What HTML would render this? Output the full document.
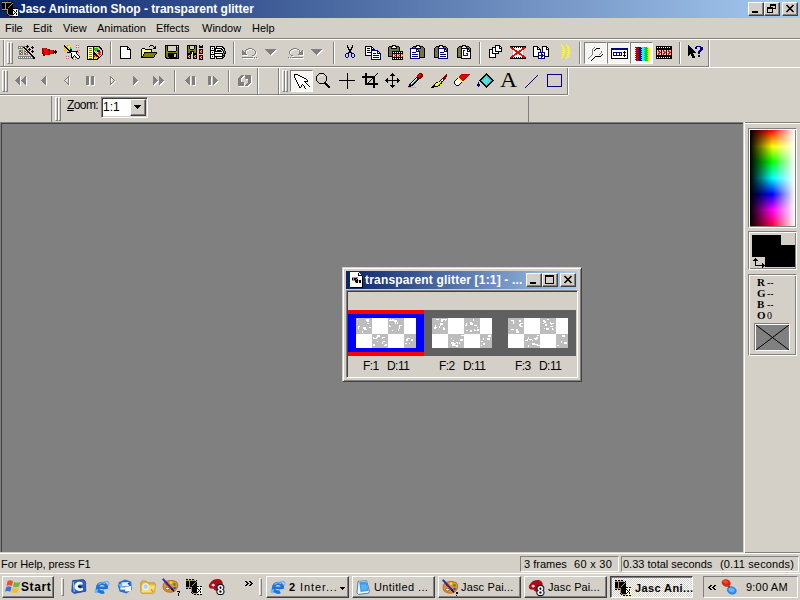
<!DOCTYPE html>
<html>
<head>
<meta charset="utf-8">
<title>Jasc Animation Shop - transparent glitter</title>
<style>
html,body{margin:0;padding:0;}
body{width:800px;height:600px;overflow:hidden;background:#d4d0c8;font-family:"Liberation Sans",sans-serif;font-size:11px;color:#000;position:relative;}
div,svg{position:absolute;}
svg{overflow:visible;}
.t{white-space:nowrap;line-height:13px;}
.b{font-weight:bold;}
#title{left:0;top:0;width:800px;height:18px;background:linear-gradient(to right,#0a246a,#a6caf0);}
.wbtn{background:#d4d0c8;box-sizing:border-box;border:1px solid;border-color:#fff #404040 #404040 #fff;box-shadow:inset -1px -1px 0 #808080;}
.raised{background:#d4d0c8;box-sizing:border-box;border:1px solid;border-color:#fff #404040 #404040 #fff;box-shadow:inset -1px -1px 0 #808080,inset 1px 1px 0 #d4d0c8;}
.sunk1{box-sizing:border-box;border:1px solid;border-color:#808080 #fff #fff #808080;}
.sunk2{box-sizing:border-box;border:1px solid;border-color:#808080 #fff #fff #808080;box-shadow:inset 1px 1px 0 #404040,inset -1px -1px 0 #d4d0c8;}
.etch{box-sizing:border-box;border:1px solid;border-color:#808080 #fff #fff #808080;box-shadow:inset 1px 1px 0 #fff,inset -1px -1px 0 #808080;}
.hl{height:1px;}
.vl{width:1px;}
.dk{background:#808080;}
.wh{background:#fff;}
.sep{width:2px;height:22px;box-sizing:border-box;border-left:1px solid #808080;border-right:1px solid #fff;}
.grip{width:3px;box-sizing:border-box;border:1px solid;border-color:#fff #808080 #808080 #fff;}
.pressed{width:23px;height:22px;box-sizing:border-box;border:1px solid;border-color:#808080 #fff #fff #808080;background:#f6f5f2;}
</style>
</head>
<body>
<!-- ===== TITLE BAR ===== -->
<div id="title">
  <svg style="left:2px;top:1px" width="16" height="16" viewBox="0 0 16 16" shape-rendering="crispEdges"><path d="M0 0h2v1h-2zM3 0h2v1h-2zM6 0h2v1h-2zM10 1h1v1h-1zM0 2h3v1h-3zM4 2h6v1h-6zM0 3h3v1h-3zM4 3h5v1h-5zM10 3h1v1h-1zM0 4h3v1h-3zM4 4h4v1h-4zM9 4h2v1h-2zM0 5h3v1h-3zM4 5h3v1h-3zM8 5h3v1h-3zM0 6h3v1h-3zM4 6h2v1h-2zM7 6h4v1h-4zM0 7h3v1h-3zM4 7h9v1h-9zM14 7h2v1h-2zM6 8h5v1h-5zM0 9h2v1h-2zM3 9h2v1h-2zM6 9h6v1h-6zM14 9h1v1h-1zM6 10h5v1h-5zM12 10h1v1h-1zM14 10h1v1h-1zM6 11h5v1h-5zM13 11h1v1h-1zM6 12h5v1h-5zM12 12h1v1h-1zM14 12h1v1h-1zM5 13h1v1h-1zM7 13h5v1h-5zM14 13h1v1h-1zM6 14h1v1h-1zM8 15h2v1h-2zM11 15h2v1h-2zM14 15h2v1h-2z" fill="#000"/><path d="M0 1h9v1h-9zM3 2h1v1h-1zM10 2h1v1h-1zM3 3h1v1h-1zM9 3h1v1h-1zM3 4h1v1h-1zM8 4h1v1h-1zM3 5h1v1h-1zM7 5h1v1h-1zM3 6h1v1h-1zM6 6h1v1h-1zM3 7h1v1h-1zM0 8h6v1h-6zM5 9h1v1h-1zM5 10h1v1h-1zM5 11h1v1h-1zM5 12h1v1h-1zM6 13h1v1h-1zM7 14h4v1h-4z" fill="#b09458"/><path d="M11 8h5v1h-5zM12 9h2v1h-2zM15 9h1v1h-1zM11 10h1v1h-1zM13 10h1v1h-1zM15 10h1v1h-1zM11 11h2v1h-2zM14 11h2v1h-2zM11 12h1v1h-1zM13 12h1v1h-1zM15 12h1v1h-1zM12 13h2v1h-2zM15 13h1v1h-1zM11 14h5v1h-5z" fill="#ffffd8"/></svg>
  <div class="t b" id="cap" style="left:19px;top:3px;color:#fff;font-size:12px;">Jasc Animation Shop - transparent glitter</div>
  <div class="wbtn" style="left:748px;top:2px;width:16px;height:14px;"><div style="left:3px;top:8px;width:6px;height:2px;background:#000"></div></div>
  <div class="wbtn" style="left:764px;top:2px;width:16px;height:14px;">
    <div style="left:5px;top:1px;width:6px;height:5px;box-sizing:border-box;border:1px solid #000;border-top-width:2px;"></div>
    <div style="left:2px;top:4px;width:6px;height:6px;box-sizing:border-box;border:1px solid #000;border-top-width:2px;background:#d4d0c8;"></div>
  </div>
  <div class="wbtn" style="left:782px;top:2px;width:16px;height:14px;">
    <svg style="left:3px;top:2px" width="8" height="7" viewBox="0 0 8 7"><path d="M0.5 0L7.5 7M7.5 0L0.5 7" stroke="#000" stroke-width="1.6" fill="none"/></svg>
  </div>
</div>
<!-- ===== MENU ===== -->
<div id="menu" style="left:0;top:18px;width:800px;height:20px;">
  <div class="t" style="left:5px;top:4px">File</div>
  <div class="t" style="left:33px;top:4px">Edit</div>
  <div class="t" style="left:63px;top:4px">View</div>
  <div class="t" style="left:97px;top:4px">Animation</div>
  <div class="t" style="left:156px;top:4px">Effects</div>
  <div class="t" style="left:202px;top:4px">Window</div>
  <div class="t" style="left:252px;top:4px">Help</div>
</div>
<div class="hl dk" style="left:0;top:38px;width:800px"></div>
<div class="hl wh" style="left:0;top:39px;width:800px"></div>
<!-- ===== TOOLBAR ROW 1 ===== -->
<div id="tb1" style="left:0;top:40px;width:800px;height:26px;">
  <div class="vl dk" style="left:3px;top:0;height:26px"></div>
  <div class="vl wh" style="left:4px;top:0;height:26px"></div>
  <div class="grip" style="left:7px;top:2px;height:22px"></div>
  <div class="grip" style="left:10px;top:2px;height:22px"></div>
  <div class="sep" style="left:110px;top:2px"></div>
  <div class="sep" style="left:233px;top:2px"></div>
  <div class="sep" style="left:333px;top:2px"></div>
  <div class="sep" style="left:479px;top:2px"></div>
  <div class="sep" style="left:579px;top:2px"></div>
  <div class="sep" style="left:679px;top:2px"></div>
  <div class="pressed" style="left:584px;top:2px"></div>
  <div class="pressed" style="left:607px;top:2px"></div>
  <div class="pressed" style="left:630px;top:2px"></div>
  <div class="vl dk" style="left:708px;top:0;height:27px"></div>
  <div class="vl wh" style="left:709px;top:0;height:27px"></div>
  <svg style="left:18px;top:5px" width="17" height="14" viewBox="0 0 17 14" shape-rendering="crispEdges"><path d="M9 0h1v1h-1zM8 1h3v1h-3zM14 1h1v1h-1zM5 2h2v1h-2zM9 2h1v1h-1zM13 2h3v1h-3zM6 3h2v1h-2zM11 3h1v1h-1zM14 3h1v1h-1zM7 4h2v1h-2zM10 4h3v1h-3zM8 5h2v1h-2zM11 5h1v1h-1zM14 5h1v1h-1zM9 6h2v1h-2zM13 6h3v1h-3zM10 7h2v1h-2zM14 7h1v1h-1zM11 8h2v1h-2zM12 9h2v1h-2zM13 10h2v1h-2zM14 11h2v1h-2zM15 12h2v1h-2zM15 13h2v1h-2z" fill="#000"/><path d="M0 1h8v1h-8zM0 2h1v1h-1zM2 2h1v1h-1zM4 2h1v1h-1zM8 2h1v1h-1zM0 3h5v1h-5zM8 3h1v1h-1zM1 5h4v1h-4zM6 5h1v1h-1zM1 6h1v1h-1zM4 6h1v1h-1zM6 6h1v1h-1zM1 7h1v1h-1zM4 7h1v1h-1zM6 7h1v1h-1zM9 7h1v1h-1zM1 8h1v1h-1zM4 8h1v1h-1zM6 8h1v1h-1zM9 8h1v1h-1zM1 9h4v1h-4zM6 9h4v1h-4zM0 11h14v1h-14zM0 12h1v1h-1zM2 12h1v1h-1zM4 12h1v1h-1zM6 12h1v1h-1zM8 12h1v1h-1zM10 12h1v1h-1zM12 12h1v1h-1zM14 12h1v1h-1zM0 13h15v1h-15z" fill="#808080"/><path d="M1 2h1v1h-1zM3 2h1v1h-1zM7 2h1v1h-1zM3 6h1v1h-1zM8 6h1v1h-1zM2 7h1v1h-1zM7 7h1v1h-1zM3 8h1v1h-1zM8 8h1v1h-1zM1 12h1v1h-1zM3 12h1v1h-1zM5 12h1v1h-1zM7 12h1v1h-1zM9 12h1v1h-1zM11 12h1v1h-1zM13 12h1v1h-1z" fill="#fff"/><path d="M5 3h1v1h-1zM6 4h1v1h-1zM7 5h1v1h-1z" fill="#ff0"/><path d="M2 6h1v1h-1zM7 6h1v1h-1zM3 7h1v1h-1zM8 7h1v1h-1zM2 8h1v1h-1zM7 8h1v1h-1z" fill="#f00"/></svg>
  <svg style="left:42px;top:8px" width="15" height="8" viewBox="0 0 15 8" shape-rendering="crispEdges"><path d="M0 0h1v1h-1zM4 0h1v1h-1zM0 1h1v1h-1zM6 1h2v1h-2zM0 2h2v1h-2zM6 2h2v1h-2zM1 3h1v1h-1zM7 3h1v1h-1zM11 3h1v1h-1zM13 3h1v1h-1zM0 4h2v1h-2zM7 4h1v1h-1zM11 4h1v1h-1zM14 4h1v1h-1zM0 5h2v1h-2zM6 5h2v1h-2zM1 6h2v1h-2zM6 6h2v1h-2zM1 7h2v1h-2z" fill="#800000"/><path d="M1 0h3v1h-3zM1 1h5v1h-5zM2 2h4v1h-4zM8 2h3v1h-3zM2 3h5v1h-5zM8 3h3v1h-3zM2 4h5v1h-5zM8 4h3v1h-3zM2 5h4v1h-4zM8 5h3v1h-3zM3 6h3v1h-3z" fill="#f00"/><path d="M11 2h1v1h-1zM13 2h1v1h-1zM12 3h1v1h-1zM14 3h1v1h-1zM12 4h2v1h-2zM11 5h1v1h-1zM13 5h1v1h-1z" fill="#000"/><path d="M0 3h1v1h-1z" fill="#c00000"/></svg>
  <svg style="left:64px;top:5px" width="16" height="15" viewBox="0 0 16 15" shape-rendering="crispEdges"><path d="M0 0h1v1h-1zM0 1h2v1h-2zM1 2h2v1h-2zM2 3h2v1h-2zM3 4h2v1h-2zM4 5h2v1h-2zM5 6h9v1h-9zM3 7h4v1h-4zM12 7h1v1h-1zM7 8h1v1h-1zM12 8h1v1h-1zM7 9h1v1h-1zM13 9h1v1h-1zM7 10h1v1h-1zM10 10h1v1h-1zM14 10h1v1h-1zM7 11h1v1h-1zM9 11h1v1h-1zM11 11h1v1h-1zM15 11h1v1h-1zM7 12h2v1h-2zM12 12h1v1h-1zM15 12h1v1h-1zM8 13h1v1h-1zM13 13h2v1h-2z" fill="#000"/><path d="M3 0h2v1h-2zM3 1h1v1h-1zM0 3h1v1h-1zM1 4h1v1h-1zM0 5h1v1h-1zM2 5h1v1h-1zM1 6h1v1h-1zM3 6h1v1h-1z" fill="#ffa000"/><path d="M12 0h1v1h-1zM14 0h1v1h-1zM12 2h1v1h-1zM14 2h1v1h-1zM13 5h1v1h-1zM15 5h1v1h-1zM14 7h1v1h-1zM2 11h1v1h-1zM4 11h1v1h-1zM9 12h1v1h-1zM11 12h1v1h-1zM2 13h1v1h-1zM4 13h1v1h-1zM9 14h1v1h-1zM11 14h1v1h-1z" fill="#c06090"/><path d="M13 0h1v1h-1zM12 1h1v1h-1zM14 1h1v1h-1zM13 2h1v1h-1zM14 5h1v1h-1zM14 6h1v1h-1zM15 7h1v1h-1zM3 11h1v1h-1zM2 12h1v1h-1zM4 12h1v1h-1zM10 12h1v1h-1zM3 13h1v1h-1zM9 13h1v1h-1zM11 13h1v1h-1zM10 14h1v1h-1z" fill="#ffc0c0"/><path d="M4 1h2v1h-2zM4 2h2v1h-2zM1 3h1v1h-1zM5 3h1v1h-1zM0 4h1v1h-1zM2 4h1v1h-1zM1 5h1v1h-1zM3 5h1v1h-1zM2 6h1v1h-1zM4 6h1v1h-1z" fill="#ff0"/><path d="M13 1h1v1h-1zM15 6h1v1h-1zM7 7h5v1h-5zM8 8h4v1h-4zM8 9h5v1h-5zM8 10h2v1h-2zM11 10h3v1h-3zM8 11h1v1h-1zM12 11h3v1h-3zM3 12h1v1h-1zM13 12h2v1h-2zM10 13h1v1h-1z" fill="#fff"/><path d="M6 2h1v1h-1zM6 3h1v1h-1z" fill="#0c0"/><path d="M7 3h1v1h-1z" fill="#0ff"/><path d="M6 4h2v1h-2zM6 5h2v1h-2z" fill="#000080"/></svg>
  <svg style="left:87px;top:6px" width="16" height="14" viewBox="0 0 16 14" shape-rendering="crispEdges"><path d="M0 0h13v1h-13zM0 1h1v1h-1zM6 1h1v1h-1zM12 1h2v1h-2zM0 2h1v1h-1zM6 2h1v1h-1zM13 2h2v1h-2zM0 3h1v1h-1zM6 3h1v1h-1zM14 3h1v1h-1zM0 4h1v1h-1zM6 4h1v1h-1zM15 4h1v1h-1zM0 5h1v1h-1zM6 5h1v1h-1zM15 5h1v1h-1zM0 6h1v1h-1zM6 6h2v1h-2zM15 6h1v1h-1zM0 7h1v1h-1zM6 7h1v1h-1zM8 7h1v1h-1zM15 7h1v1h-1zM0 8h1v1h-1zM6 8h1v1h-1zM9 8h1v1h-1zM15 8h1v1h-1zM0 9h1v1h-1zM6 9h1v1h-1zM9 9h2v1h-2zM14 9h1v1h-1zM0 10h1v1h-1zM6 10h1v1h-1zM10 10h2v1h-2zM13 10h1v1h-1zM0 11h1v1h-1zM6 11h1v1h-1zM11 11h2v1h-2zM0 12h1v1h-1zM6 12h1v1h-1zM10 12h2v1h-2zM0 13h11v1h-11z" fill="#000"/><path d="M1 1h5v1h-5zM1 2h1v1h-1zM5 2h1v1h-1zM1 3h5v1h-5zM1 4h1v1h-1zM5 4h1v1h-1zM1 5h5v1h-5zM1 6h1v1h-1zM5 6h1v1h-1zM1 7h5v1h-5zM1 8h1v1h-1zM5 8h1v1h-1zM1 9h5v1h-5zM1 10h1v1h-1zM5 10h1v1h-1zM1 11h5v1h-5zM1 12h1v1h-1zM5 12h1v1h-1z" fill="#ffffd0"/><path d="M7 1h1v1h-1zM9 1h1v1h-1zM11 1h1v1h-1zM12 2h1v1h-1zM11 3h1v1h-1zM13 3h1v1h-1zM7 4h1v1h-1zM14 4h1v1h-1zM8 5h1v1h-1zM13 5h1v1h-1zM9 6h1v1h-1zM10 7h1v1h-1zM13 7h1v1h-1zM11 8h1v1h-1zM12 9h1v1h-1zM8 10h1v1h-1zM7 11h1v1h-1zM9 11h1v1h-1zM8 12h1v1h-1z" fill="#ffa000"/><path d="M8 1h1v1h-1zM10 1h1v1h-1zM11 2h1v1h-1zM12 3h1v1h-1zM13 4h1v1h-1zM7 5h1v1h-1zM9 5h1v1h-1zM14 5h1v1h-1zM8 6h1v1h-1zM14 6h1v1h-1zM9 7h1v1h-1zM14 7h1v1h-1zM10 8h1v1h-1zM14 8h1v1h-1zM11 9h1v1h-1zM13 9h1v1h-1zM12 10h1v1h-1zM8 11h1v1h-1zM10 11h1v1h-1zM7 12h1v1h-1zM9 12h1v1h-1z" fill="#ff0"/><path d="M2 2h3v1h-3zM2 4h3v1h-3zM2 6h3v1h-3zM2 8h3v1h-3zM2 10h3v1h-3zM2 12h3v1h-3z" fill="#808000"/><path d="M7 2h4v1h-4zM7 3h4v1h-4zM8 4h2v1h-2z" fill="#0c0"/><path d="M10 4h3v1h-3zM10 5h3v1h-3z" fill="#00f"/><path d="M10 6h1v1h-1z" fill="#fff"/><path d="M11 6h1v1h-1zM7 9h1v1h-1z" fill="#c06090"/><path d="M12 6h2v1h-2zM11 7h2v1h-2zM12 8h2v1h-2zM8 9h1v1h-1zM7 10h1v1h-1zM9 10h1v1h-1z" fill="#f00"/><path d="M7 7h1v1h-1zM7 8h2v1h-2z" fill="#000080"/></svg>
  <svg style="left:120px;top:6px" width="11" height="13" viewBox="0 0 11 13" shape-rendering="crispEdges"><path d="M0 0h8v1h-8zM0 1h1v1h-1zM7 1h2v1h-2zM0 2h1v1h-1zM7 2h1v1h-1zM9 2h1v1h-1zM0 3h1v1h-1zM7 3h4v1h-4zM0 4h1v1h-1zM10 4h1v1h-1zM0 5h1v1h-1zM10 5h1v1h-1zM0 6h1v1h-1zM10 6h1v1h-1zM0 7h1v1h-1zM10 7h1v1h-1zM0 8h1v1h-1zM10 8h1v1h-1zM0 9h1v1h-1zM10 9h1v1h-1zM0 10h1v1h-1zM10 10h1v1h-1zM0 11h1v1h-1zM10 11h1v1h-1zM0 12h11v1h-11z" fill="#000"/><path d="M1 1h6v1h-6zM1 2h6v1h-6zM8 2h1v1h-1zM1 3h6v1h-6zM1 4h9v1h-9zM1 5h9v1h-9zM1 6h9v1h-9zM1 7h9v1h-9zM1 8h9v1h-9zM1 9h9v1h-9zM1 10h9v1h-9zM1 11h9v1h-9z" fill="#fff"/></svg>
  <svg style="left:141px;top:5px" width="16" height="13" viewBox="0 0 16 13" shape-rendering="crispEdges"><path d="M9 0h3v1h-3zM8 1h1v1h-1zM12 1h1v1h-1zM14 1h1v1h-1zM13 2h2v1h-2zM1 3h3v1h-3zM12 3h3v1h-3zM0 4h1v1h-1zM4 4h7v1h-7zM0 5h1v1h-1zM10 5h1v1h-1zM0 6h1v1h-1zM10 6h1v1h-1zM0 7h1v1h-1zM3 7h13v1h-13zM0 8h1v1h-1zM3 8h1v1h-1zM15 8h1v1h-1zM0 9h1v1h-1zM2 9h1v1h-1zM14 9h1v1h-1zM0 10h1v1h-1zM2 10h1v1h-1zM13 10h1v1h-1zM0 11h2v1h-2zM13 11h1v1h-1zM0 12h13v1h-13z" fill="#000"/><path d="M1 4h3v1h-3zM1 5h9v1h-9zM1 6h9v1h-9zM1 7h2v1h-2zM1 8h2v1h-2zM1 9h1v1h-1zM1 10h1v1h-1z" fill="#ffff80"/><path d="M4 8h11v1h-11zM3 9h11v1h-11zM3 10h10v1h-10zM2 11h11v1h-11z" fill="#808000"/></svg>
  <svg style="left:165px;top:5px" width="14" height="14" viewBox="0 0 14 14" shape-rendering="crispEdges"><path d="M0 0h14v1h-14zM0 1h1v1h-1zM2 1h1v1h-1zM11 1h1v1h-1zM13 1h1v1h-1zM0 2h1v1h-1zM2 2h1v1h-1zM11 2h1v1h-1zM13 2h1v1h-1zM0 3h1v1h-1zM2 3h1v1h-1zM11 3h1v1h-1zM13 3h1v1h-1zM0 4h1v1h-1zM2 4h1v1h-1zM11 4h1v1h-1zM13 4h1v1h-1zM0 5h1v1h-1zM2 5h1v1h-1zM11 5h1v1h-1zM13 5h1v1h-1zM0 6h1v1h-1zM3 6h8v1h-8zM13 6h1v1h-1zM0 7h1v1h-1zM13 7h1v1h-1zM0 8h1v1h-1zM3 8h9v1h-9zM13 8h1v1h-1zM0 9h1v1h-1zM3 9h6v1h-6zM11 9h1v1h-1zM13 9h1v1h-1zM0 10h1v1h-1zM3 10h6v1h-6zM11 10h1v1h-1zM13 10h1v1h-1zM0 11h1v1h-1zM3 11h6v1h-6zM11 11h1v1h-1zM13 11h1v1h-1zM0 12h2v1h-2zM4 12h8v1h-8zM13 12h1v1h-1zM1 13h13v1h-13z" fill="#000"/><path d="M1 1h1v1h-1zM1 2h1v1h-1zM12 2h1v1h-1zM1 3h1v1h-1zM12 3h1v1h-1zM1 4h1v1h-1zM12 4h1v1h-1zM1 5h1v1h-1zM12 5h1v1h-1zM1 6h2v1h-2zM11 6h2v1h-2zM1 7h12v1h-12zM1 8h2v1h-2zM12 8h1v1h-1zM1 9h2v1h-2zM12 9h1v1h-1zM1 10h2v1h-2zM12 10h1v1h-1zM1 11h2v1h-2zM12 11h1v1h-1zM2 12h2v1h-2zM12 12h1v1h-1z" fill="#808000"/><path d="M3 1h8v1h-8zM3 2h8v1h-8zM3 3h8v1h-8zM3 4h8v1h-8zM3 5h8v1h-8z" fill="#d4d0c8"/><path d="M12 1h1v1h-1z" fill="#fff"/><path d="M9 9h2v1h-2zM9 10h2v1h-2zM9 11h2v1h-2z" fill="#c0c0c0"/></svg>
  <svg style="left:187px;top:5px" width="16" height="15" viewBox="0 0 16 15" shape-rendering="crispEdges"><path d="M0 0h10v1h-10zM12 0h1v1h-1zM15 0h1v1h-1zM0 1h1v1h-1zM2 1h1v1h-1zM7 1h1v1h-1zM9 1h1v1h-1zM12 1h4v1h-4zM0 2h1v1h-1zM2 2h1v1h-1zM7 2h1v1h-1zM9 2h1v1h-1zM12 2h4v1h-4zM0 3h1v1h-1zM2 3h1v1h-1zM7 3h1v1h-1zM9 3h1v1h-1zM0 4h1v1h-1zM3 4h4v1h-4zM9 4h1v1h-1zM12 4h4v1h-4zM0 5h1v1h-1zM9 5h1v1h-1zM12 5h1v1h-1zM15 5h1v1h-1zM0 6h1v1h-1zM3 6h4v1h-4zM9 6h1v1h-1zM12 6h1v1h-1zM15 6h1v1h-1zM0 7h1v1h-1zM3 7h2v1h-2zM6 7h1v1h-1zM9 7h1v1h-1zM12 7h1v1h-1zM15 7h1v1h-1zM0 8h5v1h-5zM6 8h4v1h-4zM12 8h4v1h-4zM0 9h4v1h-4zM6 9h4v1h-4zM0 10h1v1h-1zM3 10h1v1h-1zM6 10h1v1h-1zM9 10h1v1h-1zM12 10h4v1h-4zM0 11h1v1h-1zM3 11h1v1h-1zM6 11h1v1h-1zM9 11h1v1h-1zM12 11h1v1h-1zM15 11h1v1h-1zM0 12h1v1h-1zM3 12h1v1h-1zM6 12h1v1h-1zM9 12h1v1h-1zM12 12h1v1h-1zM15 12h1v1h-1zM0 13h4v1h-4zM6 13h4v1h-4zM12 13h1v1h-1zM15 13h1v1h-1zM12 14h4v1h-4z" fill="#000"/><path d="M1 1h1v1h-1zM8 1h1v1h-1zM1 2h1v1h-1zM8 2h1v1h-1zM1 3h1v1h-1zM8 3h1v1h-1zM1 4h2v1h-2zM7 4h2v1h-2zM1 5h8v1h-8zM1 6h2v1h-2zM7 6h2v1h-2zM1 7h2v1h-2zM7 7h2v1h-2z" fill="#808000"/><path d="M3 1h4v1h-4zM3 2h4v1h-4zM3 3h4v1h-4z" fill="#d4d0c8"/><path d="M13 5h1v1h-1zM14 6h1v1h-1zM13 7h1v1h-1zM1 10h1v1h-1zM7 10h1v1h-1zM2 11h1v1h-1zM8 11h1v1h-1zM13 11h1v1h-1zM1 12h1v1h-1zM7 12h1v1h-1zM14 12h1v1h-1zM13 13h1v1h-1z" fill="#f00"/><path d="M14 5h1v1h-1zM13 6h1v1h-1zM14 7h1v1h-1zM2 10h1v1h-1zM8 10h1v1h-1zM1 11h1v1h-1zM7 11h1v1h-1zM14 11h1v1h-1zM2 12h1v1h-1zM8 12h1v1h-1zM13 12h1v1h-1zM14 13h1v1h-1z" fill="#ffc0c0"/><path d="M5 7h1v1h-1zM5 8h1v1h-1z" fill="#fff"/></svg>
  <svg style="left:210px;top:6px" width="16" height="13" viewBox="0 0 16 13" shape-rendering="crispEdges"><path d="M0 0h5v1h-5zM6 0h7v1h-7zM0 1h1v1h-1zM4 1h1v1h-1zM6 1h1v1h-1zM12 1h2v1h-2zM0 2h1v1h-1zM2 2h1v1h-1zM4 2h8v1h-8zM13 2h2v1h-2zM0 3h1v1h-1zM4 3h2v1h-2zM11 3h2v1h-2zM14 3h1v1h-1zM0 4h6v1h-6zM7 4h4v1h-4zM12 4h1v1h-1zM14 4h1v1h-1zM0 5h1v1h-1zM4 5h8v1h-8zM13 5h1v1h-1zM15 5h1v1h-1zM0 6h1v1h-1zM2 6h1v1h-1zM4 6h1v1h-1zM13 6h1v1h-1zM15 6h1v1h-1zM0 7h1v1h-1zM4 7h9v1h-9zM14 7h2v1h-2zM0 8h5v1h-5zM12 8h1v1h-1zM14 8h1v1h-1zM0 9h1v1h-1zM4 9h1v1h-1zM12 9h3v1h-3zM0 10h1v1h-1zM2 10h1v1h-1zM4 10h9v1h-9zM14 10h1v1h-1zM0 11h1v1h-1zM4 11h1v1h-1zM6 11h1v1h-1zM12 11h2v1h-2zM0 12h5v1h-5zM6 12h7v1h-7z" fill="#000"/><path d="M1 1h3v1h-3zM7 1h5v1h-5zM1 2h1v1h-1zM3 2h1v1h-1zM12 2h1v1h-1zM1 3h3v1h-3zM6 3h5v1h-5zM13 3h1v1h-1zM6 4h1v1h-1zM11 4h1v1h-1zM1 5h3v1h-3zM12 5h1v1h-1zM1 6h1v1h-1zM3 6h1v1h-1zM5 6h8v1h-8zM1 7h3v1h-3zM5 8h7v1h-7zM1 9h3v1h-3zM1 10h1v1h-1zM3 10h1v1h-1zM1 11h3v1h-3zM7 11h5v1h-5z" fill="#fff"/><path d="M13 4h1v1h-1zM14 5h1v1h-1zM14 6h1v1h-1zM13 7h1v1h-1zM13 8h1v1h-1zM13 10h1v1h-1z" fill="#808080"/><path d="M5 9h7v1h-7z" fill="#ffff80"/></svg>
  <svg style="left:242px;top:8px" width="16" height="11" viewBox="0 0 16 11" shape-rendering="crispEdges"><path d="M6 0h4v1h-4zM4 1h2v1h-2zM10 1h2v1h-2zM0 2h1v1h-1zM3 2h1v1h-1zM12 2h1v1h-1zM0 3h2v1h-2zM3 3h1v1h-1zM13 3h1v1h-1zM0 4h4v1h-4zM13 4h1v1h-1zM0 5h4v1h-4zM13 5h1v1h-1zM0 6h5v1h-5zM12 6h1v1h-1zM10 7h2v1h-2zM0 9h11v1h-11zM12 9h1v1h-1zM14 9h1v1h-1z" fill="#808080"/><path d="M7 1h3v1h-3zM5 2h2v1h-2zM11 2h1v1h-1zM4 3h1v1h-1zM4 4h1v1h-1zM14 4h1v1h-1zM4 5h1v1h-1zM14 5h1v1h-1zM14 6h1v1h-1zM1 7h5v1h-5zM13 7h1v1h-1zM11 8h2v1h-2zM1 10h11v1h-11zM13 10h1v1h-1zM15 10h1v1h-1z" fill="#fff"/></svg>
  <svg style="left:265px;top:9px" width="12" height="7" viewBox="0 0 12 7" shape-rendering="crispEdges"><path d="M0 0h11v1h-11zM1 1h9v1h-9zM2 2h7v1h-7zM3 3h5v1h-5zM4 4h3v1h-3zM5 5h1v1h-1z" fill="#808080"/><path d="M10 1h2v1h-2zM9 2h2v1h-2zM8 3h2v1h-2zM7 4h2v1h-2zM6 5h2v1h-2zM6 6h1v1h-1z" fill="#fff"/></svg>
  <svg style="left:288px;top:8px" width="16" height="11" viewBox="0 0 16 11" shape-rendering="crispEdges"><path d="M5 0h4v1h-4zM3 1h2v1h-2zM9 1h2v1h-2zM2 2h1v1h-1zM11 2h1v1h-1zM14 2h1v1h-1zM1 3h1v1h-1zM11 3h1v1h-1zM13 3h2v1h-2zM1 4h1v1h-1zM11 4h4v1h-4zM1 5h1v1h-1zM11 5h4v1h-4zM2 6h1v1h-1zM10 6h5v1h-5zM3 7h2v1h-2zM0 9h1v1h-1zM2 9h1v1h-1zM4 9h11v1h-11z" fill="#808080"/><path d="M6 1h3v1h-3zM4 2h2v1h-2zM10 2h1v1h-1zM3 3h1v1h-1zM12 3h1v1h-1zM15 3h1v1h-1zM2 4h1v1h-1zM15 4h1v1h-1zM2 5h1v1h-1zM15 5h1v1h-1zM15 6h1v1h-1zM11 7h5v1h-5zM4 8h2v1h-2zM1 10h1v1h-1zM3 10h1v1h-1zM5 10h11v1h-11z" fill="#fff"/></svg>
  <svg style="left:311px;top:9px" width="12" height="7" viewBox="0 0 12 7" shape-rendering="crispEdges"><path d="M0 0h11v1h-11zM1 1h9v1h-9zM2 2h7v1h-7zM3 3h5v1h-5zM4 4h3v1h-3zM5 5h1v1h-1z" fill="#808080"/><path d="M10 1h2v1h-2zM9 2h2v1h-2zM8 3h2v1h-2zM7 4h2v1h-2zM6 5h2v1h-2zM6 6h1v1h-1z" fill="#fff"/></svg>
  <svg style="left:345px;top:5px" width="10" height="13" viewBox="0 0 10 13" shape-rendering="crispEdges"><path d="M2 0h1v1h-1zM7 0h1v1h-1zM2 1h1v1h-1zM7 1h1v1h-1zM2 2h2v1h-2zM6 2h2v1h-2zM3 3h1v1h-1zM6 3h1v1h-1zM3 4h4v1h-4zM4 5h2v1h-2zM4 6h2v1h-2zM4 7h2v1h-2z" fill="#000"/><path d="M3 7h1v1h-1zM6 7h1v1h-1zM1 8h3v1h-3zM6 8h3v1h-3zM0 9h1v1h-1zM3 9h1v1h-1zM6 9h1v1h-1zM9 9h1v1h-1zM0 10h1v1h-1zM3 10h1v1h-1zM6 10h1v1h-1zM9 10h1v1h-1zM0 11h1v1h-1zM3 11h1v1h-1zM6 11h1v1h-1zM9 11h1v1h-1zM1 12h2v1h-2zM7 12h2v1h-2z" fill="#000080"/></svg>
  <svg style="left:365px;top:6px" width="16" height="14" viewBox="0 0 16 14" shape-rendering="crispEdges"><path d="M0 0h7v1h-7zM0 1h1v1h-1zM6 1h2v1h-2zM0 2h1v1h-1zM2 2h3v1h-3zM6 2h1v1h-1zM8 2h1v1h-1zM0 3h1v1h-1zM6 3h4v1h-4zM0 4h1v1h-1zM2 4h3v1h-3zM0 5h1v1h-1zM0 6h1v1h-1zM2 6h4v1h-4zM0 7h1v1h-1zM0 8h1v1h-1zM0 9h6v1h-6z" fill="#000"/><path d="M1 1h5v1h-5zM1 2h1v1h-1zM5 2h1v1h-1zM7 2h1v1h-1zM1 3h5v1h-5zM1 4h1v1h-1zM5 4h1v1h-1zM1 5h5v1h-5zM7 5h5v1h-5zM1 6h1v1h-1zM7 6h5v1h-5zM13 6h1v1h-1zM1 7h5v1h-5zM7 7h1v1h-1zM11 7h1v1h-1zM1 8h5v1h-5zM7 8h8v1h-8zM7 9h1v1h-1zM14 9h1v1h-1zM7 10h8v1h-8zM7 11h1v1h-1zM14 11h1v1h-1zM7 12h8v1h-8z" fill="#fff"/><path d="M6 4h7v1h-7zM6 5h1v1h-1zM12 5h2v1h-2zM6 6h1v1h-1zM12 6h1v1h-1zM14 6h1v1h-1zM6 7h1v1h-1zM8 7h3v1h-3zM12 7h4v1h-4zM6 8h1v1h-1zM15 8h1v1h-1zM6 9h1v1h-1zM8 9h6v1h-6zM15 9h1v1h-1zM6 10h1v1h-1zM15 10h1v1h-1zM6 11h1v1h-1zM8 11h6v1h-6zM15 11h1v1h-1zM6 12h1v1h-1zM15 12h1v1h-1zM6 13h10v1h-10z" fill="#000080"/></svg>
  <svg style="left:387px;top:5px" width="16" height="15" viewBox="0 0 16 15" shape-rendering="crispEdges"><path d="M5 0h4v1h-4zM2 1h4v1h-4zM8 1h4v1h-4zM1 2h1v1h-1zM4 2h1v1h-1zM9 2h1v1h-1zM12 2h1v1h-1zM1 3h1v1h-1zM4 3h6v1h-6zM12 3h1v1h-1zM1 4h1v1h-1zM12 4h1v1h-1zM1 5h1v1h-1zM12 5h1v1h-1zM1 6h1v1h-1zM5 6h11v1h-11zM1 7h1v1h-1zM5 7h1v1h-1zM7 7h1v1h-1zM9 7h1v1h-1zM11 7h1v1h-1zM13 7h1v1h-1zM15 7h1v1h-1zM1 8h1v1h-1zM5 8h11v1h-11zM1 9h1v1h-1zM5 9h1v1h-1zM9 9h1v1h-1zM13 9h1v1h-1zM1 10h1v1h-1zM5 10h1v1h-1zM9 10h1v1h-1zM13 10h1v1h-1zM1 11h5v1h-5zM9 11h1v1h-1zM13 11h1v1h-1zM5 12h11v1h-11zM5 13h1v1h-1zM7 13h1v1h-1zM9 13h1v1h-1zM11 13h1v1h-1zM13 13h1v1h-1zM15 13h1v1h-1zM5 14h11v1h-11z" fill="#000"/><path d="M6 1h2v1h-2zM5 2h4v1h-4z" fill="#ffff80"/><path d="M2 2h2v1h-2zM10 2h2v1h-2zM2 3h2v1h-2zM10 3h2v1h-2zM2 4h10v1h-10zM2 5h10v1h-10zM2 6h3v1h-3zM2 7h3v1h-3zM2 8h3v1h-3zM2 9h3v1h-3zM2 10h3v1h-3z" fill="#767640"/><path d="M6 7h1v1h-1zM8 7h1v1h-1zM10 7h1v1h-1zM12 7h1v1h-1zM14 7h1v1h-1zM6 13h1v1h-1zM8 13h1v1h-1zM10 13h1v1h-1zM12 13h1v1h-1zM14 13h1v1h-1z" fill="#fff"/><path d="M6 9h1v1h-1zM8 9h1v1h-1zM10 9h1v1h-1zM12 9h1v1h-1zM14 9h1v1h-1zM6 10h2v1h-2zM10 10h2v1h-2zM14 10h2v1h-2zM6 11h1v1h-1zM8 11h1v1h-1zM10 11h1v1h-1zM12 11h1v1h-1zM14 11h1v1h-1z" fill="#ffc0c0"/><path d="M7 9h1v1h-1zM11 9h1v1h-1zM15 9h1v1h-1zM8 10h1v1h-1zM12 10h1v1h-1zM7 11h1v1h-1zM11 11h1v1h-1zM15 11h1v1h-1z" fill="#f00"/></svg>
  <svg style="left:410px;top:5px" width="16" height="14" viewBox="0 0 16 14" shape-rendering="crispEdges"><path d="M6 0h4v1h-4zM3 1h4v1h-4zM9 1h4v1h-4zM2 2h1v1h-1zM5 2h1v1h-1zM10 2h1v1h-1zM13 2h1v1h-1zM7 3h4v1h-4zM14 3h1v1h-1zM14 4h1v1h-1zM14 5h1v1h-1zM14 6h1v1h-1zM14 7h1v1h-1zM14 8h1v1h-1zM14 9h1v1h-1zM14 10h1v1h-1zM14 11h1v1h-1zM10 12h5v1h-5z" fill="#000"/><path d="M7 1h2v1h-2zM6 2h4v1h-4z" fill="#ffff80"/><path d="M3 2h2v1h-2zM11 2h2v1h-2zM11 3h3v1h-3zM8 4h6v1h-6zM9 5h5v1h-5zM10 6h4v1h-4zM10 7h4v1h-4zM10 8h4v1h-4zM10 9h4v1h-4zM10 10h4v1h-4zM10 11h4v1h-4z" fill="#767640"/><path d="M0 3h7v1h-7zM0 4h1v1h-1zM6 4h2v1h-2zM0 5h1v1h-1zM6 5h1v1h-1zM8 5h1v1h-1zM0 6h1v1h-1zM6 6h4v1h-4zM0 7h1v1h-1zM2 7h4v1h-4zM9 7h1v1h-1zM0 8h1v1h-1zM9 8h1v1h-1zM0 9h1v1h-1zM2 9h6v1h-6zM9 9h1v1h-1zM0 10h1v1h-1zM9 10h1v1h-1zM0 11h1v1h-1zM2 11h6v1h-6zM9 11h1v1h-1zM0 12h1v1h-1zM9 12h1v1h-1zM0 13h10v1h-10z" fill="#000080"/><path d="M1 4h5v1h-5zM1 5h5v1h-5zM7 5h1v1h-1zM1 6h5v1h-5zM1 7h1v1h-1zM6 7h3v1h-3zM1 8h8v1h-8zM1 9h1v1h-1zM8 9h1v1h-1zM1 10h8v1h-8zM1 11h1v1h-1zM8 11h1v1h-1zM1 12h8v1h-8z" fill="#fff"/></svg>
  <svg style="left:434px;top:5px" width="16" height="14" viewBox="0 0 16 14" shape-rendering="crispEdges"><path d="M5 0h4v1h-4zM2 1h4v1h-4zM8 1h4v1h-4zM1 2h1v1h-1zM4 2h1v1h-1zM9 2h1v1h-1zM12 2h1v1h-1zM0 3h1v1h-1zM11 3h1v1h-1zM13 3h1v1h-1zM0 4h1v1h-1zM13 4h1v1h-1zM0 5h1v1h-1zM13 5h1v1h-1zM0 6h1v1h-1zM0 7h1v1h-1zM0 8h1v1h-1zM0 9h1v1h-1zM0 10h1v1h-1zM0 11h1v1h-1zM0 12h4v1h-4z" fill="#000"/><path d="M6 1h2v1h-2zM5 2h4v1h-4z" fill="#ffff80"/><path d="M2 2h2v1h-2zM10 2h2v1h-2zM1 3h3v1h-3zM12 3h1v1h-1zM1 4h3v1h-3zM12 4h1v1h-1zM1 5h3v1h-3zM1 6h3v1h-3zM1 7h3v1h-3zM1 8h3v1h-3zM1 9h3v1h-3zM1 10h3v1h-3zM1 11h3v1h-3z" fill="#767640"/><path d="M4 3h7v1h-7zM4 4h1v1h-1zM10 4h2v1h-2zM4 5h1v1h-1zM10 5h1v1h-1zM12 5h1v1h-1zM4 6h1v1h-1zM10 6h4v1h-4zM4 7h1v1h-1zM6 7h4v1h-4zM13 7h1v1h-1zM4 8h1v1h-1zM13 8h1v1h-1zM4 9h1v1h-1zM6 9h6v1h-6zM13 9h1v1h-1zM4 10h1v1h-1zM13 10h1v1h-1zM4 11h1v1h-1zM6 11h6v1h-6zM13 11h1v1h-1zM4 12h1v1h-1zM13 12h1v1h-1zM4 13h10v1h-10z" fill="#000080"/><path d="M5 4h5v1h-5zM5 5h5v1h-5zM11 5h1v1h-1zM5 6h5v1h-5zM5 7h1v1h-1zM10 7h3v1h-3zM5 8h8v1h-8zM5 9h1v1h-1zM12 9h1v1h-1zM5 10h8v1h-8zM5 11h1v1h-1zM12 11h1v1h-1zM5 12h8v1h-8z" fill="#fff"/></svg>
  <svg style="left:457px;top:5px" width="15" height="14" viewBox="0 0 15 14" shape-rendering="crispEdges"><path d="M5 0h4v1h-4zM2 1h4v1h-4zM8 1h4v1h-4zM1 2h1v1h-1zM4 2h1v1h-1zM9 2h1v1h-1zM12 2h1v1h-1zM0 3h1v1h-1zM4 3h8v1h-8zM13 3h1v1h-1zM0 4h1v1h-1zM4 4h1v1h-1zM10 4h2v1h-2zM13 4h1v1h-1zM0 5h1v1h-1zM4 5h1v1h-1zM10 5h1v1h-1zM12 5h2v1h-2zM0 6h1v1h-1zM4 6h1v1h-1zM10 6h4v1h-4zM0 7h1v1h-1zM4 7h1v1h-1zM13 7h1v1h-1zM0 8h1v1h-1zM4 8h1v1h-1zM13 8h1v1h-1zM0 9h1v1h-1zM4 9h1v1h-1zM13 9h1v1h-1zM0 10h1v1h-1zM4 10h1v1h-1zM13 10h1v1h-1zM0 11h1v1h-1zM4 11h1v1h-1zM13 11h1v1h-1zM0 12h5v1h-5zM13 12h1v1h-1zM4 13h10v1h-10z" fill="#000"/><path d="M6 1h2v1h-2zM5 2h4v1h-4z" fill="#ffff80"/><path d="M2 2h2v1h-2zM10 2h2v1h-2zM1 3h3v1h-3zM12 3h1v1h-1zM1 4h3v1h-3zM12 4h1v1h-1zM1 5h3v1h-3zM1 6h3v1h-3zM1 7h3v1h-3zM1 8h3v1h-3zM1 9h3v1h-3zM1 10h3v1h-3zM1 11h3v1h-3z" fill="#767640"/><path d="M5 4h5v1h-5zM5 5h1v1h-1zM8 5h2v1h-2zM11 5h1v1h-1zM5 6h1v1h-1zM7 6h3v1h-3zM5 7h1v1h-1zM7 7h6v1h-6zM5 8h1v1h-1zM7 8h2v1h-2zM11 8h2v1h-2zM5 9h1v1h-1zM7 9h3v1h-3zM11 9h2v1h-2zM5 10h1v1h-1zM11 10h2v1h-2zM5 11h8v1h-8zM5 12h8v1h-8z" fill="#fff"/><path d="M6 5h2v1h-2zM6 6h1v1h-1zM6 7h1v1h-1zM6 8h1v1h-1zM9 8h2v1h-2zM6 9h1v1h-1zM10 9h1v1h-1zM6 10h5v1h-5z" fill="#00f"/></svg>
  <svg style="left:489px;top:5px" width="14" height="13" viewBox="0 0 14 13" shape-rendering="crispEdges"><path d="M6 0h5v1h-5zM6 1h1v1h-1zM10 1h2v1h-2zM3 2h4v1h-4zM10 2h1v1h-1zM12 2h1v1h-1zM3 3h1v1h-1zM6 3h1v1h-1zM10 3h3v1h-3zM0 4h4v1h-4zM6 4h1v1h-1zM12 4h1v1h-1zM0 5h1v1h-1zM3 5h1v1h-1zM6 5h1v1h-1zM12 5h1v1h-1zM0 6h1v1h-1zM3 6h1v1h-1zM6 6h7v1h-7zM0 7h1v1h-1zM3 7h1v1h-1zM9 7h1v1h-1zM0 8h1v1h-1zM3 8h7v1h-7zM0 9h1v1h-1zM6 9h1v1h-1zM0 10h1v1h-1zM6 10h1v1h-1zM0 11h1v1h-1zM6 11h1v1h-1zM0 12h7v1h-7z" fill="#000"/><path d="M7 1h3v1h-3zM7 2h3v1h-3zM11 2h1v1h-1zM4 3h2v1h-2zM7 3h3v1h-3zM4 4h2v1h-2zM7 4h5v1h-5zM1 5h2v1h-2zM4 5h2v1h-2zM7 5h5v1h-5zM1 6h2v1h-2zM4 6h2v1h-2zM1 7h2v1h-2zM4 7h5v1h-5zM1 8h2v1h-2zM1 9h5v1h-5zM1 10h5v1h-5zM1 11h5v1h-5z" fill="#fff"/></svg>
  <svg style="left:510px;top:6px" width="16" height="13" viewBox="0 0 16 13" shape-rendering="crispEdges"><path d="M0 0h16v1h-16zM2 1h1v1h-1zM4 1h1v1h-1zM6 1h1v1h-1zM8 1h1v1h-1zM10 1h1v1h-1zM12 1h1v1h-1zM15 1h1v1h-1zM2 11h1v1h-1zM4 11h1v1h-1zM6 11h1v1h-1zM8 11h1v1h-1zM10 11h1v1h-1zM12 11h1v1h-1zM15 11h1v1h-1zM0 12h16v1h-16z" fill="#000"/><path d="M0 1h2v1h-2zM13 1h2v1h-2zM1 2h3v1h-3zM12 2h3v1h-3zM2 3h3v1h-3zM11 3h3v1h-3zM4 4h3v1h-3zM9 4h3v1h-3zM5 5h6v1h-6zM6 6h4v1h-4zM5 7h6v1h-6zM4 8h3v1h-3zM9 8h3v1h-3zM2 9h3v1h-3zM11 9h3v1h-3zM1 10h3v1h-3zM12 10h3v1h-3zM0 11h2v1h-2zM13 11h2v1h-2z" fill="#f00"/><path d="M3 1h1v1h-1zM5 1h1v1h-1zM7 1h1v1h-1zM9 1h1v1h-1zM11 1h1v1h-1zM4 2h8v1h-8zM5 3h6v1h-6zM3 4h1v1h-1zM7 4h2v1h-2zM12 4h1v1h-1zM3 5h2v1h-2zM11 5h2v1h-2zM3 6h3v1h-3zM10 6h3v1h-3zM3 7h2v1h-2zM11 7h2v1h-2zM3 8h1v1h-1zM7 8h2v1h-2zM12 8h1v1h-1zM5 9h6v1h-6zM4 10h8v1h-8zM3 11h1v1h-1zM5 11h1v1h-1zM7 11h1v1h-1zM9 11h1v1h-1zM11 11h1v1h-1z" fill="#fff"/><path d="M2 4h1v1h-1zM13 4h1v1h-1zM2 5h1v1h-1zM13 5h1v1h-1zM2 6h1v1h-1zM13 6h1v1h-1zM2 7h1v1h-1zM13 7h1v1h-1zM2 8h1v1h-1zM13 8h1v1h-1z" fill="#c0c0c0"/></svg>
  <svg style="left:533px;top:6px" width="16" height="13" viewBox="0 0 16 13" shape-rendering="crispEdges"><path d="M0 0h5v1h-5zM9 0h5v1h-5zM0 1h1v1h-1zM4 1h2v1h-2zM9 1h1v1h-1zM13 1h2v1h-2zM0 2h1v1h-1zM4 2h1v1h-1zM6 2h1v1h-1zM9 2h1v1h-1zM13 2h1v1h-1zM15 2h1v1h-1zM0 3h1v1h-1zM4 3h4v1h-4zM9 3h1v1h-1zM13 3h3v1h-3zM0 4h1v1h-1zM7 4h1v1h-1zM9 4h1v1h-1zM15 4h1v1h-1zM0 5h1v1h-1zM7 5h1v1h-1zM9 5h1v1h-1zM15 5h1v1h-1zM0 6h1v1h-1zM15 6h1v1h-1zM0 7h1v1h-1zM15 7h1v1h-1zM0 8h1v1h-1zM15 8h1v1h-1zM0 9h1v1h-1zM15 9h1v1h-1zM0 10h5v1h-5zM12 10h4v1h-4z" fill="#000"/><path d="M1 1h3v1h-3zM10 1h3v1h-3zM1 2h3v1h-3zM5 2h1v1h-1zM10 2h3v1h-3zM14 2h1v1h-1zM1 3h3v1h-3zM10 3h3v1h-3zM1 4h6v1h-6zM10 4h5v1h-5zM1 5h6v1h-6zM10 5h5v1h-5zM1 6h4v1h-4zM12 6h3v1h-3zM1 7h4v1h-4zM6 7h2v1h-2zM9 7h2v1h-2zM12 7h3v1h-3zM1 8h4v1h-4zM6 8h2v1h-2zM10 8h1v1h-1zM12 8h3v1h-3zM1 9h4v1h-4zM12 9h3v1h-3zM6 10h2v1h-2zM10 10h1v1h-1zM6 11h2v1h-2zM9 11h2v1h-2z" fill="#fff"/><path d="M5 6h7v1h-7zM5 7h1v1h-1zM11 7h1v1h-1zM5 8h1v1h-1zM11 8h1v1h-1zM5 9h1v1h-1zM11 9h1v1h-1zM5 10h1v1h-1zM11 10h1v1h-1zM5 11h1v1h-1zM11 11h1v1h-1zM5 12h7v1h-7z" fill="#000080"/><path d="M8 7h1v1h-1zM8 8h2v1h-2zM6 9h5v1h-5zM8 10h2v1h-2zM8 11h1v1h-1z" fill="#00f"/></svg>
  <svg style="left:560px;top:4px" width="10" height="15" viewBox="0 0 10 15" shape-rendering="crispEdges"><path d="M1 0h1v1h-1zM6 0h1v1h-1zM1 1h2v1h-2zM6 1h2v1h-2zM2 2h2v1h-2zM7 2h2v1h-2zM2 3h2v1h-2zM7 3h2v1h-2zM2 4h3v1h-3zM7 4h3v1h-3zM3 5h2v1h-2zM8 5h2v1h-2zM2 6h3v1h-3zM7 6h3v1h-3zM3 7h2v1h-2zM8 7h2v1h-2zM2 8h3v1h-3zM7 8h3v1h-3zM3 9h2v1h-2zM8 9h2v1h-2zM2 10h3v1h-3zM7 10h3v1h-3zM2 11h2v1h-2zM7 11h2v1h-2zM2 12h2v1h-2zM7 12h2v1h-2zM1 13h2v1h-2zM6 13h2v1h-2zM1 14h1v1h-1zM6 14h1v1h-1z" fill="#f6f236"/></svg>
  <svg style="left:588px;top:7px" width="16" height="14" viewBox="0 0 16 14" shape-rendering="crispEdges"><path d="M6 0h1v1h-1zM5 1h1v1h-1zM4 2h1v1h-1zM4 3h1v1h-1zM4 4h1v1h-1zM13 4h1v1h-1zM4 5h1v1h-1zM13 5h1v1h-1zM4 6h1v1h-1zM12 6h1v1h-1zM4 7h1v1h-1zM11 7h1v1h-1zM3 8h1v1h-1zM2 9h1v1h-1zM1 10h1v1h-1zM0 11h1v1h-1z" fill="#808080"/><path d="M8 1h4v1h-4zM7 2h1v1h-1zM6 3h1v1h-1zM14 7h1v1h-1zM13 8h1v1h-1zM7 9h6v1h-6zM6 10h1v1h-1zM5 11h1v1h-1zM4 12h1v1h-1zM3 13h1v1h-1z" fill="#000"/></svg>
  <svg style="left:611px;top:8px" width="17" height="11" viewBox="0 0 17 11" shape-rendering="crispEdges"><path d="M0 0h17v1h-17zM0 1h17v1h-17zM2 4h9v1h-9zM2 5h1v1h-1zM5 5h1v1h-1zM8 5h1v1h-1zM10 5h1v1h-1zM2 6h1v1h-1zM5 6h1v1h-1zM8 6h1v1h-1zM10 6h1v1h-1zM2 7h9v1h-9z" fill="#000080"/><path d="M0 2h1v1h-1zM16 2h1v1h-1zM0 3h1v1h-1zM13 3h1v1h-1zM16 3h1v1h-1zM0 4h1v1h-1zM12 4h3v1h-3zM16 4h1v1h-1zM0 5h1v1h-1zM13 5h1v1h-1zM16 5h1v1h-1zM0 6h1v1h-1zM13 6h1v1h-1zM16 6h1v1h-1zM0 7h1v1h-1zM12 7h3v1h-3zM16 7h1v1h-1zM0 8h1v1h-1zM13 8h1v1h-1zM16 8h1v1h-1zM0 9h1v1h-1zM16 9h1v1h-1zM0 10h17v1h-17z" fill="#000"/><path d="M1 2h15v1h-15zM1 3h12v1h-12zM14 3h2v1h-2zM1 4h1v1h-1zM11 4h1v1h-1zM15 4h1v1h-1zM1 5h1v1h-1zM3 5h2v1h-2zM6 5h2v1h-2zM9 5h1v1h-1zM11 5h2v1h-2zM14 5h2v1h-2zM1 6h1v1h-1zM3 6h2v1h-2zM6 6h2v1h-2zM9 6h1v1h-1zM11 6h2v1h-2zM14 6h2v1h-2zM1 7h1v1h-1zM11 7h1v1h-1zM15 7h1v1h-1zM1 8h12v1h-12zM14 8h2v1h-2zM1 9h15v1h-15z" fill="#fff"/></svg>
  <svg style="left:635px;top:7px" width="15" height="14" viewBox="0 0 15 14" shape-rendering="crispEdges"><path d="M0 0h3v1h-3zM1 1h3v1h-3zM0 2h3v1h-3zM1 3h3v1h-3zM0 4h3v1h-3zM1 5h3v1h-3zM0 6h3v1h-3zM1 7h3v1h-3zM0 8h3v1h-3zM1 9h3v1h-3zM0 10h3v1h-3zM1 11h3v1h-3zM0 12h3v1h-3zM1 13h3v1h-3z" fill="#c00000"/><path d="M3 0h3v1h-3zM4 1h3v1h-3zM3 2h3v1h-3zM4 3h3v1h-3zM3 4h3v1h-3zM4 5h3v1h-3zM3 6h3v1h-3zM4 7h3v1h-3zM3 8h3v1h-3zM4 9h3v1h-3zM3 10h3v1h-3zM4 11h3v1h-3zM3 12h3v1h-3zM4 13h3v1h-3z" fill="#000080"/><path d="M6 0h3v1h-3zM7 1h3v1h-3zM6 2h3v1h-3zM7 3h3v1h-3zM6 4h3v1h-3zM7 5h3v1h-3zM6 6h3v1h-3zM7 7h3v1h-3zM6 8h3v1h-3zM7 9h3v1h-3zM6 10h3v1h-3zM7 11h3v1h-3zM6 12h3v1h-3zM7 13h3v1h-3z" fill="#0ff"/><path d="M9 0h3v1h-3zM10 1h3v1h-3zM9 2h3v1h-3zM10 3h3v1h-3zM9 4h3v1h-3zM10 5h3v1h-3zM9 6h3v1h-3zM10 7h3v1h-3zM9 8h3v1h-3zM10 9h3v1h-3zM9 10h3v1h-3zM10 11h3v1h-3zM9 12h3v1h-3zM10 13h3v1h-3z" fill="#0c0"/><path d="M12 0h2v1h-2zM13 1h2v1h-2zM12 2h2v1h-2zM13 3h2v1h-2zM12 4h2v1h-2zM13 5h2v1h-2zM12 6h2v1h-2zM13 7h2v1h-2zM12 8h2v1h-2zM13 9h2v1h-2zM12 10h2v1h-2zM13 11h2v1h-2zM12 12h2v1h-2zM13 13h2v1h-2z" fill="#ff0"/></svg>
  <svg style="left:656px;top:6px" width="16" height="13" viewBox="0 0 16 13" shape-rendering="crispEdges"><path d="M0 0h16v1h-16zM0 1h1v1h-1zM2 1h1v1h-1zM4 1h1v1h-1zM6 1h1v1h-1zM8 1h1v1h-1zM10 1h1v1h-1zM12 1h1v1h-1zM14 1h2v1h-2zM0 2h16v1h-16zM0 3h16v1h-16zM0 4h1v1h-1zM5 4h1v1h-1zM10 4h1v1h-1zM15 4h1v1h-1zM0 5h1v1h-1zM5 5h1v1h-1zM10 5h1v1h-1zM15 5h1v1h-1zM0 6h1v1h-1zM5 6h1v1h-1zM10 6h1v1h-1zM15 6h1v1h-1zM0 7h1v1h-1zM5 7h1v1h-1zM10 7h1v1h-1zM15 7h1v1h-1zM0 8h1v1h-1zM5 8h1v1h-1zM10 8h1v1h-1zM15 8h1v1h-1zM0 9h16v1h-16zM0 10h16v1h-16zM0 11h1v1h-1zM2 11h1v1h-1zM4 11h1v1h-1zM6 11h1v1h-1zM8 11h1v1h-1zM10 11h1v1h-1zM12 11h1v1h-1zM14 11h2v1h-2zM0 12h16v1h-16z" fill="#000"/><path d="M1 1h1v1h-1zM3 1h1v1h-1zM5 1h1v1h-1zM7 1h1v1h-1zM9 1h1v1h-1zM11 1h1v1h-1zM13 1h1v1h-1zM1 11h1v1h-1zM3 11h1v1h-1zM5 11h1v1h-1zM7 11h1v1h-1zM9 11h1v1h-1zM11 11h1v1h-1zM13 11h1v1h-1z" fill="#fff"/><path d="M1 4h1v1h-1zM3 4h2v1h-2zM6 4h1v1h-1zM8 4h2v1h-2zM11 4h1v1h-1zM13 4h2v1h-2zM1 5h1v1h-1zM4 5h1v1h-1zM6 5h1v1h-1zM9 5h1v1h-1zM11 5h1v1h-1zM14 5h1v1h-1zM1 6h2v1h-2zM6 6h2v1h-2zM11 6h2v1h-2zM1 7h1v1h-1zM4 7h1v1h-1zM6 7h1v1h-1zM9 7h1v1h-1zM11 7h1v1h-1zM14 7h1v1h-1zM1 8h1v1h-1zM3 8h2v1h-2zM6 8h1v1h-1zM8 8h2v1h-2zM11 8h1v1h-1zM13 8h2v1h-2z" fill="#ffc0c0"/><path d="M2 4h1v1h-1zM7 4h1v1h-1zM12 4h1v1h-1zM2 5h2v1h-2zM7 5h2v1h-2zM12 5h2v1h-2zM3 6h2v1h-2zM8 6h2v1h-2zM13 6h2v1h-2zM2 7h2v1h-2zM7 7h2v1h-2zM12 7h2v1h-2zM2 8h1v1h-1zM7 8h1v1h-1zM12 8h1v1h-1z" fill="#f00"/></svg>
  <svg style="left:688px;top:5px" width="16" height="13" viewBox="0 0 16 13" shape-rendering="crispEdges"><path d="M0 0h1v1h-1zM0 1h2v1h-2zM0 2h3v1h-3zM0 3h4v1h-4zM0 4h5v1h-5zM0 5h6v1h-6zM0 6h7v1h-7zM0 7h8v1h-8zM0 8h5v1h-5zM0 9h2v1h-2zM3 9h3v1h-3zM0 10h1v1h-1zM3 10h3v1h-3zM4 11h3v1h-3zM4 12h3v1h-3z" fill="#000"/><path d="M8 1h5v1h-5zM7 2h2v1h-2zM12 2h3v1h-3zM7 3h2v1h-2zM12 3h3v1h-3zM12 4h3v1h-3zM11 5h3v1h-3zM10 6h3v1h-3zM10 7h2v1h-2zM10 8h2v1h-2zM10 10h2v1h-2zM10 11h2v1h-2z" fill="#000080"/></svg>
</div>
<div class="hl dk" style="left:0;top:66px;width:709px"></div>
<div class="hl wh" style="left:0;top:67px;width:800px"></div>
<!-- ===== TOOLBAR ROW 2 ===== -->
<div id="tb2" style="left:0;top:68px;width:800px;height:26px;">
  <div class="grip" style="left:2px;top:2px;height:22px"></div>
  <div class="grip" style="left:5px;top:2px;height:22px"></div>
  <div class="sep" style="left:174px;top:2px"></div>
  <div class="sep" style="left:228px;top:2px"></div>
  <div class="vl dk" style="left:257px;top:0;height:27px"></div>
  <div class="vl wh" style="left:258px;top:0;height:27px"></div>
  <div class="vl dk" style="left:278px;top:0;height:27px"></div>
  <div class="vl wh" style="left:279px;top:0;height:27px"></div>
  <div class="grip" style="left:282px;top:2px;height:22px"></div>
  <div class="grip" style="left:285px;top:2px;height:22px"></div>
  <div class="pressed" style="left:290px;top:2px"></div>
  <div class="vl dk" style="left:567px;top:0;height:27px"></div>
  <div class="vl wh" style="left:568px;top:0;height:27px"></div>
  <svg style="left:15px;top:8px" width="12" height="10" viewBox="0 0 12 10" shape-rendering="crispEdges"><path d="M4 0h1v1h-1zM10 0h1v1h-1zM3 1h2v1h-2zM9 1h2v1h-2zM2 2h3v1h-3zM8 2h3v1h-3zM1 3h4v1h-4zM7 3h4v1h-4zM0 4h5v1h-5zM6 4h5v1h-5zM1 5h4v1h-4zM7 5h4v1h-4zM2 6h3v1h-3zM8 6h3v1h-3zM3 7h2v1h-2zM9 7h2v1h-2zM4 8h1v1h-1zM10 8h1v1h-1z" fill="#808080"/><path d="M5 1h1v1h-1zM11 1h1v1h-1zM5 2h1v1h-1zM11 2h1v1h-1zM5 3h1v1h-1zM11 3h1v1h-1zM5 4h1v1h-1zM11 4h1v1h-1zM5 5h1v1h-1zM11 5h1v1h-1zM5 6h1v1h-1zM11 6h1v1h-1zM5 7h1v1h-1zM11 7h1v1h-1zM5 8h1v1h-1zM11 8h1v1h-1zM5 9h1v1h-1zM11 9h1v1h-1z" fill="#fff"/></svg>
  <svg style="left:41px;top:8px" width="6" height="10" viewBox="0 0 6 10" shape-rendering="crispEdges"><path d="M4 0h1v1h-1zM3 1h2v1h-2zM2 2h3v1h-3zM1 3h4v1h-4zM0 4h5v1h-5zM1 5h4v1h-4zM2 6h3v1h-3zM3 7h2v1h-2zM4 8h1v1h-1z" fill="#808080"/><path d="M5 1h1v1h-1zM5 2h1v1h-1zM5 3h1v1h-1zM5 4h1v1h-1zM5 5h1v1h-1zM5 6h1v1h-1zM5 7h1v1h-1zM5 8h1v1h-1zM5 9h1v1h-1z" fill="#fff"/></svg>
  <svg style="left:64px;top:8px" width="6" height="10" viewBox="0 0 6 10" shape-rendering="crispEdges"><path d="M4 0h1v1h-1zM3 1h2v1h-2zM2 2h1v1h-1zM4 2h1v1h-1zM1 3h1v1h-1zM4 3h1v1h-1zM0 4h1v1h-1zM4 4h1v1h-1zM1 5h1v1h-1zM4 5h1v1h-1zM2 6h1v1h-1zM4 6h1v1h-1zM3 7h2v1h-2zM4 8h1v1h-1z" fill="#808080"/><path d="M5 1h1v1h-1zM5 2h1v1h-1zM3 3h1v1h-1zM5 3h1v1h-1zM2 4h1v1h-1zM5 4h1v1h-1zM5 5h1v1h-1zM5 6h1v1h-1zM5 7h1v1h-1zM5 8h1v1h-1zM5 9h1v1h-1z" fill="#fff"/></svg>
  <svg style="left:86px;top:8px" width="9" height="10" viewBox="0 0 9 10" shape-rendering="crispEdges"><path d="M0 0h3v1h-3zM5 0h3v1h-3zM0 1h3v1h-3zM5 1h3v1h-3zM0 2h3v1h-3zM5 2h3v1h-3zM0 3h3v1h-3zM5 3h3v1h-3zM0 4h3v1h-3zM5 4h3v1h-3zM0 5h3v1h-3zM5 5h3v1h-3zM0 6h3v1h-3zM5 6h3v1h-3zM0 7h3v1h-3zM5 7h3v1h-3zM0 8h3v1h-3zM5 8h3v1h-3z" fill="#808080"/><path d="M3 1h1v1h-1zM8 1h1v1h-1zM3 2h1v1h-1zM8 2h1v1h-1zM3 3h1v1h-1zM8 3h1v1h-1zM3 4h1v1h-1zM8 4h1v1h-1zM3 5h1v1h-1zM8 5h1v1h-1zM3 6h1v1h-1zM8 6h1v1h-1zM3 7h1v1h-1zM8 7h1v1h-1zM3 8h1v1h-1zM8 8h1v1h-1zM1 9h3v1h-3zM6 9h3v1h-3z" fill="#fff"/></svg>
  <svg style="left:110px;top:8px" width="6" height="10" viewBox="0 0 6 10" shape-rendering="crispEdges"><path d="M0 0h1v1h-1zM0 1h2v1h-2zM0 2h1v1h-1zM2 2h1v1h-1zM0 3h1v1h-1zM3 3h1v1h-1zM0 4h1v1h-1zM4 4h1v1h-1zM0 5h1v1h-1zM3 5h1v1h-1zM0 6h1v1h-1zM2 6h1v1h-1zM0 7h2v1h-2zM0 8h1v1h-1z" fill="#808080"/><path d="M1 2h1v1h-1zM1 3h1v1h-1zM1 4h1v1h-1zM1 5h1v1h-1zM5 5h1v1h-1zM1 6h1v1h-1zM4 6h1v1h-1zM3 7h1v1h-1zM1 8h2v1h-2zM1 9h1v1h-1z" fill="#fff"/></svg>
  <svg style="left:133px;top:8px" width="6" height="10" viewBox="0 0 6 10" shape-rendering="crispEdges"><path d="M0 0h1v1h-1zM0 1h2v1h-2zM0 2h3v1h-3zM0 3h4v1h-4zM0 4h5v1h-5zM0 5h4v1h-4zM0 6h3v1h-3zM0 7h2v1h-2zM0 8h1v1h-1z" fill="#808080"/><path d="M4 5h2v1h-2zM3 6h2v1h-2zM2 7h2v1h-2zM1 8h2v1h-2zM1 9h1v1h-1z" fill="#fff"/></svg>
  <svg style="left:153px;top:8px" width="12" height="10" viewBox="0 0 12 10" shape-rendering="crispEdges"><path d="M0 0h1v1h-1zM6 0h1v1h-1zM0 1h2v1h-2zM6 1h2v1h-2zM0 2h3v1h-3zM6 2h3v1h-3zM0 3h4v1h-4zM6 3h4v1h-4zM0 4h5v1h-5zM6 4h5v1h-5zM0 5h4v1h-4zM6 5h4v1h-4zM0 6h3v1h-3zM6 6h3v1h-3zM0 7h2v1h-2zM6 7h2v1h-2zM0 8h1v1h-1zM6 8h1v1h-1z" fill="#808080"/><path d="M4 5h2v1h-2zM10 5h2v1h-2zM3 6h2v1h-2zM9 6h2v1h-2zM2 7h2v1h-2zM8 7h2v1h-2zM1 8h2v1h-2zM7 8h2v1h-2zM1 9h1v1h-1zM7 9h1v1h-1z" fill="#fff"/></svg>
  <svg style="left:185px;top:8px" width="11" height="10" viewBox="0 0 11 10" shape-rendering="crispEdges"><path d="M4 0h1v1h-1zM7 0h3v1h-3zM3 1h2v1h-2zM7 1h3v1h-3zM2 2h3v1h-3zM7 2h3v1h-3zM1 3h4v1h-4zM7 3h3v1h-3zM0 4h5v1h-5zM7 4h3v1h-3zM1 5h4v1h-4zM7 5h3v1h-3zM2 6h3v1h-3zM7 6h3v1h-3zM3 7h2v1h-2zM7 7h3v1h-3zM4 8h1v1h-1zM7 8h3v1h-3z" fill="#808080"/><path d="M5 1h1v1h-1zM10 1h1v1h-1zM5 2h1v1h-1zM10 2h1v1h-1zM5 3h1v1h-1zM10 3h1v1h-1zM5 4h1v1h-1zM10 4h1v1h-1zM5 5h1v1h-1zM10 5h1v1h-1zM5 6h1v1h-1zM10 6h1v1h-1zM5 7h1v1h-1zM10 7h1v1h-1zM5 8h1v1h-1zM10 8h1v1h-1zM5 9h1v1h-1zM8 9h3v1h-3z" fill="#fff"/></svg>
  <svg style="left:208px;top:8px" width="11" height="10" viewBox="0 0 11 10" shape-rendering="crispEdges"><path d="M0 0h3v1h-3zM5 0h1v1h-1zM0 1h3v1h-3zM5 1h2v1h-2zM0 2h3v1h-3zM5 2h3v1h-3zM0 3h3v1h-3zM5 3h4v1h-4zM0 4h3v1h-3zM5 4h5v1h-5zM0 5h3v1h-3zM5 5h4v1h-4zM0 6h3v1h-3zM5 6h3v1h-3zM0 7h3v1h-3zM5 7h2v1h-2zM0 8h3v1h-3zM5 8h1v1h-1z" fill="#808080"/><path d="M3 1h1v1h-1zM3 2h1v1h-1zM3 3h1v1h-1zM3 4h1v1h-1zM3 5h1v1h-1zM9 5h2v1h-2zM3 6h1v1h-1zM8 6h2v1h-2zM3 7h1v1h-1zM7 7h2v1h-2zM3 8h1v1h-1zM6 8h2v1h-2zM1 9h3v1h-3zM6 9h1v1h-1z" fill="#fff"/></svg>
  <svg style="left:238px;top:7px" width="14" height="12" viewBox="0 0 14 12" shape-rendering="crispEdges"><path d="M3 0h3v1h-3zM7 0h6v1h-6zM2 1h3v1h-3zM7 1h6v1h-6zM1 2h3v1h-3zM7 2h6v1h-6zM0 3h3v1h-3zM7 3h6v1h-6zM0 4h3v1h-3zM10 4h3v1h-3zM0 5h3v1h-3zM10 5h3v1h-3zM0 6h3v1h-3zM10 6h3v1h-3zM0 7h6v1h-6zM10 7h3v1h-3zM0 8h6v1h-6zM9 8h3v1h-3zM0 9h6v1h-6zM8 9h3v1h-3zM0 10h6v1h-6zM7 10h3v1h-3z" fill="#808080"/><path d="M5 1h2v1h-2zM13 1h1v1h-1zM4 2h2v1h-2zM13 2h1v1h-1zM3 3h2v1h-2zM13 3h1v1h-1zM3 4h1v1h-1zM8 4h2v1h-2zM13 4h1v1h-1zM3 5h1v1h-1zM13 5h1v1h-1zM3 6h1v1h-1zM13 6h1v1h-1zM13 7h1v1h-1zM6 8h1v1h-1zM12 8h2v1h-2zM6 9h1v1h-1zM11 9h2v1h-2zM6 10h1v1h-1zM10 10h2v1h-2zM1 11h6v1h-6zM8 11h3v1h-3z" fill="#fff"/></svg>
  <svg style="left:294px;top:6px" width="17" height="15" viewBox="0 0 17 15" shape-rendering="crispEdges"><path d="M0 0h4v1h-4zM0 1h1v1h-1zM4 1h2v1h-2zM0 2h1v1h-1zM6 2h2v1h-2zM0 3h1v1h-1zM8 3h2v1h-2zM1 4h1v1h-1zM10 4h2v1h-2zM1 5h1v1h-1zM12 5h1v1h-1zM2 6h1v1h-1zM13 6h1v1h-1zM2 7h1v1h-1zM10 7h4v1h-4zM3 8h1v1h-1zM11 8h1v1h-1zM3 9h1v1h-1zM12 9h1v1h-1zM4 10h1v1h-1zM8 10h1v1h-1zM13 10h1v1h-1zM4 11h1v1h-1zM7 11h1v1h-1zM9 11h1v1h-1zM14 11h1v1h-1zM5 12h1v1h-1zM7 12h1v1h-1zM10 12h1v1h-1zM15 12h1v1h-1zM5 13h2v1h-2zM10 13h1v1h-1zM11 14h1v1h-1z" fill="#000"/><path d="M1 1h3v1h-3zM1 2h5v1h-5zM1 3h7v1h-7zM2 4h8v1h-8zM2 5h10v1h-10zM3 6h10v1h-10zM3 7h7v1h-7zM4 8h7v1h-7zM4 9h8v1h-8zM5 10h3v1h-3zM9 10h4v1h-4zM5 11h2v1h-2zM10 11h4v1h-4zM6 12h1v1h-1zM11 12h4v1h-4zM11 13h2v1h-2z" fill="#fff"/></svg>
  <svg style="left:316px;top:5px" width="15" height="15" viewBox="0 0 15 15" shape-rendering="crispEdges"><path d="M3 0h5v1h-5zM2 1h1v1h-1zM8 1h1v1h-1zM1 2h1v1h-1zM9 2h1v1h-1zM0 3h1v1h-1zM10 3h1v1h-1zM0 4h1v1h-1zM10 4h1v1h-1zM0 5h1v1h-1zM10 5h1v1h-1zM0 6h1v1h-1zM10 6h1v1h-1zM0 7h1v1h-1zM10 7h1v1h-1zM1 8h1v1h-1zM9 8h1v1h-1zM2 9h1v1h-1zM8 9h2v1h-2zM3 10h8v1h-8zM9 11h3v1h-3zM10 12h3v1h-3zM11 13h3v1h-3zM12 14h2v1h-2z" fill="#000"/><path d="M4 2h3v1h-3zM3 3h1v1h-1zM2 4h1v1h-1zM2 5h1v1h-1z" fill="#e8e8e8"/></svg>
  <svg style="left:339px;top:5px" width="16" height="16" viewBox="0 0 16 16" shape-rendering="crispEdges"><path d="M8 0h1v1h-1zM8 1h1v1h-1zM8 2h1v1h-1zM8 3h1v1h-1zM8 4h1v1h-1zM8 5h1v1h-1zM8 6h1v1h-1zM0 7h16v1h-16zM8 8h1v1h-1zM8 9h1v1h-1zM8 10h1v1h-1zM8 11h1v1h-1zM8 12h1v1h-1zM8 13h1v1h-1zM8 14h1v1h-1zM8 15h1v1h-1z" fill="#000"/></svg>
  <svg style="left:362px;top:5px" width="16" height="15" viewBox="0 0 16 15" shape-rendering="crispEdges"><path d="M3 0h2v1h-2zM15 0h1v1h-1zM3 1h2v1h-2zM14 1h1v1h-1zM3 2h2v1h-2zM13 2h1v1h-1zM0 3h13v1h-13zM0 4h13v1h-13zM3 5h2v1h-2zM10 5h3v1h-3zM3 6h2v1h-2zM9 6h1v1h-1zM11 6h2v1h-2zM3 7h2v1h-2zM8 7h1v1h-1zM11 7h2v1h-2zM3 8h2v1h-2zM7 8h1v1h-1zM11 8h2v1h-2zM3 9h2v1h-2zM6 9h1v1h-1zM11 9h2v1h-2zM3 10h13v1h-13zM3 11h13v1h-13zM11 12h2v1h-2zM11 13h2v1h-2zM11 14h2v1h-2z" fill="#000"/></svg>
  <svg style="left:385px;top:5px" width="16" height="15" viewBox="0 0 16 15" shape-rendering="crispEdges"><path d="M7 0h1v1h-1zM6 1h3v1h-3zM5 2h5v1h-5zM7 3h1v1h-1zM7 4h1v1h-1zM2 5h1v1h-1zM7 5h1v1h-1zM12 5h1v1h-1zM1 6h2v1h-2zM7 6h1v1h-1zM12 6h2v1h-2zM0 7h15v1h-15zM1 8h2v1h-2zM7 8h1v1h-1zM12 8h2v1h-2zM2 9h1v1h-1zM7 9h1v1h-1zM12 9h1v1h-1zM7 10h1v1h-1zM7 11h1v1h-1zM5 12h5v1h-5zM6 13h3v1h-3zM7 14h1v1h-1z" fill="#000"/></svg>
  <svg style="left:408px;top:5px" width="16" height="15" viewBox="0 0 16 15" shape-rendering="crispEdges"><path d="M11 0h3v1h-3zM10 1h1v1h-1zM13 1h2v1h-2zM9 2h1v1h-1zM13 2h2v1h-2zM9 3h1v1h-1zM12 3h3v1h-3zM9 4h5v1h-5zM10 5h3v1h-3z" fill="#800000"/><path d="M11 1h2v1h-2zM10 2h3v1h-3zM10 3h2v1h-2z" fill="#f00"/><path d="M8 4h1v1h-1zM7 5h1v1h-1zM9 5h1v1h-1zM6 6h1v1h-1zM9 6h2v1h-2zM5 7h1v1h-1zM8 7h2v1h-2zM4 8h1v1h-1zM7 8h2v1h-2zM3 9h1v1h-1zM6 9h2v1h-2zM2 10h1v1h-1zM5 10h2v1h-2zM1 11h2v1h-2zM4 11h2v1h-2zM1 12h4v1h-4zM0 13h3v1h-3z" fill="#000"/><path d="M8 5h1v1h-1zM7 6h1v1h-1zM6 7h1v1h-1zM5 8h1v1h-1zM4 9h1v1h-1zM3 10h1v1h-1z" fill="#fff"/><path d="M8 6h1v1h-1zM7 7h1v1h-1zM6 8h1v1h-1zM5 9h1v1h-1zM4 10h1v1h-1zM3 11h1v1h-1zM0 14h8v1h-8z" fill="#0ff"/></svg>
  <svg style="left:431px;top:6px" width="16" height="14" viewBox="0 0 16 14" shape-rendering="crispEdges"><path d="M15 0h1v1h-1zM14 1h2v1h-2zM13 2h3v1h-3zM12 3h3v1h-3zM11 4h4v1h-4zM12 5h2v1h-2z" fill="#800000"/><path d="M10 5h1v1h-1zM9 6h1v1h-1zM12 6h1v1h-1zM8 7h1v1h-1zM10 7h2v1h-2zM5 8h2v1h-2zM10 8h1v1h-1zM4 9h1v1h-1zM9 9h2v1h-2zM3 10h1v1h-1zM8 10h1v1h-1zM2 11h2v1h-2zM7 11h2v1h-2zM1 12h6v1h-6zM0 13h3v1h-3z" fill="#000"/><path d="M11 5h1v1h-1zM10 6h2v1h-2z" fill="#fff"/><path d="M9 7h1v1h-1zM7 8h3v1h-3zM5 9h4v1h-4zM4 10h4v1h-4zM4 11h3v1h-3z" fill="#ff0"/></svg>
  <svg style="left:454px;top:6px" width="16" height="12" viewBox="0 0 16 12" shape-rendering="crispEdges"><path d="M7 0h9v1h-9zM6 1h1v1h-1zM8 1h1v1h-1zM10 1h1v1h-1zM12 1h1v1h-1zM14 1h1v1h-1zM5 2h1v1h-1zM7 2h1v1h-1zM9 2h1v1h-1zM11 2h1v1h-1zM13 2h1v1h-1zM5 3h1v1h-1zM7 3h1v1h-1zM9 3h1v1h-1zM11 3h2v1h-2zM6 4h1v1h-1zM8 4h1v1h-1zM10 4h2v1h-2zM7 5h1v1h-1zM9 5h2v1h-2zM8 6h2v1h-2z" fill="#c00000"/><path d="M7 1h1v1h-1zM9 1h1v1h-1zM11 1h1v1h-1zM13 1h1v1h-1zM6 2h1v1h-1zM8 2h1v1h-1zM10 2h1v1h-1zM12 2h1v1h-1zM6 3h1v1h-1zM8 3h1v1h-1zM10 3h1v1h-1zM7 4h1v1h-1zM9 4h1v1h-1zM8 5h1v1h-1z" fill="#f00"/><path d="M4 3h1v1h-1zM4 4h2v1h-2zM5 5h2v1h-2zM6 6h2v1h-2zM7 7h2v1h-2z" fill="#ff0"/><path d="M3 4h1v1h-1zM2 5h1v1h-1zM1 6h1v1h-1zM0 7h1v1h-1zM0 8h1v1h-1zM7 8h1v1h-1zM0 9h1v1h-1zM6 9h1v1h-1zM1 10h1v1h-1zM5 10h1v1h-1zM2 11h3v1h-3z" fill="#000"/><path d="M3 5h2v1h-2zM2 6h4v1h-4zM1 7h6v1h-6zM1 8h6v1h-6zM1 9h5v1h-5zM2 10h3v1h-3z" fill="#fff"/></svg>
  <svg style="left:477px;top:5px" width="17" height="15" viewBox="0 0 17 15" shape-rendering="crispEdges"><path d="M9 0h1v1h-1zM8 1h3v1h-3zM7 2h2v1h-2zM10 2h2v1h-2zM6 3h2v1h-2zM11 3h2v1h-2zM5 4h2v1h-2zM12 4h2v1h-2zM4 5h2v1h-2zM13 5h2v1h-2zM3 6h2v1h-2zM14 6h2v1h-2zM2 7h2v1h-2zM15 7h2v1h-2zM3 8h2v1h-2zM14 8h2v1h-2zM4 9h2v1h-2zM13 9h2v1h-2zM5 10h2v1h-2zM12 10h2v1h-2zM6 11h2v1h-2zM11 11h2v1h-2zM7 12h2v1h-2zM10 12h2v1h-2zM8 13h3v1h-3zM9 14h1v1h-1z" fill="#000"/><path d="M9 2h1v1h-1zM8 3h3v1h-3zM7 4h1v1h-1zM10 4h2v1h-2zM6 5h1v1h-1zM8 5h1v1h-1zM11 5h2v1h-2zM5 6h2v1h-2zM12 6h2v1h-2zM4 7h1v1h-1zM13 7h2v1h-2zM5 8h1v1h-1zM11 8h1v1h-1zM13 8h1v1h-1zM6 9h1v1h-1zM12 9h1v1h-1zM7 10h1v1h-1zM10 10h2v1h-2zM8 11h1v1h-1zM10 11h1v1h-1zM9 12h1v1h-1z" fill="#30c8c0"/><path d="M8 4h2v1h-2zM7 5h1v1h-1zM9 5h2v1h-2zM7 6h5v1h-5zM5 7h8v1h-8zM6 8h5v1h-5zM12 8h1v1h-1zM7 9h5v1h-5zM8 10h2v1h-2zM9 11h1v1h-1z" fill="#58e0dc"/><path d="M1 9h1v1h-1zM1 10h1v1h-1zM0 11h3v1h-3zM0 12h3v1h-3zM1 13h1v1h-1z" fill="#000080"/></svg>
  <svg style="left:525px;top:7px" width="13" height="13" viewBox="0 0 13 13" shape-rendering="crispEdges"><path d="M12 0h1v1h-1zM11 1h1v1h-1zM10 2h1v1h-1zM9 3h1v1h-1zM8 4h1v1h-1zM7 5h1v1h-1zM6 6h1v1h-1zM5 7h1v1h-1zM4 8h1v1h-1zM3 9h1v1h-1zM2 10h1v1h-1zM1 11h1v1h-1zM0 12h1v1h-1z" fill="#000080"/></svg>
  <div class="t" style="left:500px;top:1px;font-family:'Liberation Serif',serif;font-size:20px;line-height:22px;transform:scaleX(1.18);transform-origin:0 0;">A</div>
  <div style="left:547px;top:6px;width:15px;height:13px;box-sizing:border-box;border:1.5px solid #000080;"></div>
</div>
<div class="hl dk" style="left:0;top:94px;width:568px"></div>
<div class="hl wh" style="left:0;top:95px;width:568px"></div>
<!-- ===== TOOLBAR ROW 3 (ZOOM) ===== -->
<div id="tb3" style="left:0;top:96px;width:800px;height:26px;">
  <div class="vl dk" style="left:51px;top:0;height:26px"></div>
  <div class="grip" style="left:55px;top:1px;height:24px"></div>
  <div class="grip" style="left:58px;top:1px;height:24px"></div>
  <div class="t" style="left:67px;top:2px;font-size:12px;line-height:14px;letter-spacing:-0.6px"><span style="text-decoration:underline">Z</span>oom:</div>
  <div class="sunk2" style="left:101px;top:1px;width:47px;height:21px;background:#fff;">
    <div class="t" style="left:1px;top:2px;font-size:12px;line-height:14px">1:1</div>
    <div class="raised" style="left:28px;top:1px;width:16px;height:17px;">
      <svg style="left:3px;top:5px" width="7" height="4" viewBox="0 0 7 4" shape-rendering="crispEdges"><path d="M0 0H7L3.5 4Z" fill="#000"/></svg>
    </div>
  </div>
  <div class="vl dk" style="left:528px;top:0;height:26px"></div>
</div>
<!-- ===== MDI AREA ===== -->
<div id="mdi" style="left:0;top:122px;width:743px;height:430px;background:#808080;box-sizing:border-box;border-top:1px solid #808080;border-left:1px solid #808080;box-shadow:inset 1px 1px 0 #404040;"></div>
<div class="vl wh" style="left:744px;top:122px;height:432px"></div>
<div class="hl wh" style="left:0;top:553px;width:745px"></div>
<div id="child" style="left:342px;top:267px;width:240px;height:115px;background:#d4d0c8;box-sizing:border-box;border:1px solid;border-color:#d4d0c8 #404040 #404040 #d4d0c8;box-shadow:inset 1px 1px 0 #fff,inset -1px -1px 0 #808080;">
  <div id="ctitle" style="left:3px;top:3px;width:231px;height:18px;background:linear-gradient(to right,#0a246a,#a6caf0);">
    <div class="t b" id="ccap" style="left:19px;top:3px;color:#fff;font-size:12px;letter-spacing:0.18px;">transparent glitter [1:1] - ...</div>
    <div class="wbtn" style="left:180px;top:2px;width:16px;height:14px;"><div style="left:3px;top:8px;width:6px;height:2px;background:#000"></div></div>
    <div class="wbtn" style="left:196px;top:2px;width:16px;height:14px;"><div style="left:2px;top:1px;width:9px;height:9px;box-sizing:border-box;border:1px solid #000;border-top-width:2px;"></div></div>
    <div class="wbtn" style="left:214px;top:2px;width:16px;height:14px;">
      <svg style="left:3px;top:2px" width="8" height="7" viewBox="0 0 8 7"><path d="M0.5 0L7.5 7M7.5 0L0.5 7" stroke="#000" stroke-width="1.6" fill="none"/></svg>
    </div>
    <svg style="left:4px;top:1px" width="13" height="16" viewBox="0 0 13 16" shape-rendering="crispEdges"><path d="M0 0h9v1h-9zM0 1h8v1h-8zM9 1h1v1h-1zM0 2h8v1h-8zM9 2h2v1h-2zM0 3h8v1h-8zM0 4h12v1h-12zM0 5h2v1h-2zM8 5h4v1h-4zM0 6h2v1h-2zM8 6h4v1h-4zM0 7h2v1h-2zM8 7h4v1h-4zM0 8h2v1h-2zM11 8h1v1h-1zM0 9h4v1h-4zM11 9h1v1h-1zM0 10h4v1h-4zM11 10h1v1h-1zM0 11h5v1h-5zM9 11h3v1h-3zM0 12h12v1h-12zM0 13h12v1h-12zM0 14h12v1h-12z" fill="#fff"/><path d="M8 1h1v1h-1zM8 2h1v1h-1zM8 3h4v1h-4zM12 4h1v1h-1zM12 5h1v1h-1zM2 6h1v1h-1zM4 6h3v1h-3zM12 6h1v1h-1zM2 7h1v1h-1zM4 7h2v1h-2zM7 7h1v1h-1zM12 7h1v1h-1zM5 8h3v1h-3zM9 8h2v1h-2zM12 8h1v1h-1zM5 9h3v1h-3zM9 9h2v1h-2zM12 9h1v1h-1zM6 10h2v1h-2zM9 10h2v1h-2zM12 10h1v1h-1zM12 11h1v1h-1zM12 12h1v1h-1zM12 13h1v1h-1zM12 14h1v1h-1zM1 15h12v1h-12z" fill="#000"/><path d="M2 5h6v1h-6zM3 6h1v1h-1zM7 6h1v1h-1zM3 7h1v1h-1zM6 7h1v1h-1zM2 8h3v1h-3zM8 8h1v1h-1zM5 10h1v1h-1z" fill="#b09458"/><path d="M4 9h1v1h-1zM8 9h1v1h-1zM4 10h1v1h-1zM8 10h1v1h-1zM5 11h4v1h-4z" fill="#ffffd8"/></svg>
  </div>
  <div id="cclient" class="sunk2" style="left:3px;top:22px;width:232px;height:88px;background:#d4d0c8;">
    <div style="left:1px;top:19px;width:228px;height:46px;background:#606060;"></div>
    <div style="left:1px;top:19px;width:76px;height:46px;background:#f00;"></div>
    <div style="left:1px;top:23px;width:76px;height:38px;background:#00f;"></div>
    <svg style="left:9px;top:27px" width="60" height="30" viewBox="0 0 60 30" shape-rendering="crispEdges"><rect width="60" height="30" fill="#fff"/><path d="M0 0h16v16h-16zM32 0h16v16h-16zM16 16h16v14h-16zM48 16h12v14h-12z" fill="#bdbdbd"/><path d="M8 9h2v2h-2zM9 10h1v1h-1zM13 9h2v1h-2zM2 8h2v1h-2zM2 9h1v2h-1zM8 11h3v1h-3zM10 1h3v1h-3zM1 1h1v1h-1zM10 1h2v2h-2zM8 10h1v1h-1zM11 5h2v1h-2zM11 2h2v2h-2zM7 9h1v2h-1zM6 13h1v2h-1zM33 2h3v1h-3zM39 2h2v2h-2zM34 1h1v1h-1zM36 1h2v2h-2zM44 7h2v1h-2zM42 11h1v2h-1zM38 2h2v2h-2zM33 7h1v1h-1zM36 12h1v1h-1zM33 8h2v1h-2zM43 9h1v2h-1zM41 4h1v2h-1zM43 7h1v2h-1zM39 4h1v2h-1zM29 26h2v1h-2zM20 19h2v1h-2zM17 19h1v2h-1zM21 17h3v2h-3zM21 23h1v1h-1zM18 20h3v1h-3zM17 26h2v2h-2zM26 24h1v2h-1zM26 19h2v1h-2zM27 19h2v1h-2zM26 20h1v1h-1zM28 27h3v1h-3zM27 23h2v1h-2zM23 17h1v1h-1zM49 25h2v1h-2zM55 21h2v2h-2zM53 25h1v1h-1zM51 20h2v1h-2zM53 20h1v1h-1zM50 21h2v2h-2z" fill="#fff"/></svg>
    <svg style="left:85px;top:27px" width="60" height="30" viewBox="0 0 60 30" shape-rendering="crispEdges"><rect width="60" height="30" fill="#fff"/><path d="M0 0h16v16h-16zM32 0h16v16h-16zM16 16h16v14h-16zM48 16h12v14h-12z" fill="#bdbdbd"/><path d="M8 5h3v2h-3zM3 7h1v2h-1zM8 5h2v1h-2zM9 1h3v1h-3zM8 6h1v2h-1zM4 1h3v1h-3zM2 9h2v2h-2zM13 2h1v1h-1zM11 9h1v1h-1zM7 8h1v2h-1zM3 9h2v1h-2zM12 1h3v1h-3zM9 2h2v2h-2zM11 10h2v2h-2zM42 7h3v1h-3zM43 12h1v1h-1zM45 11h2v2h-2zM38 12h2v2h-2zM34 5h1v2h-1zM38 6h3v1h-3zM33 7h2v1h-2zM41 1h1v2h-1zM33 7h1v1h-1zM45 9h1v1h-1zM34 12h2v1h-2zM39 5h2v2h-2zM42 11h1v2h-1zM38 4h2v2h-2zM24 24h2v1h-2zM19 24h3v2h-3zM19 20h1v1h-1zM21 22h1v1h-1zM29 17h3v1h-3zM20 26h1v2h-1zM25 25h1v1h-1zM22 27h2v1h-2zM20 25h3v2h-3zM24 27h2v2h-2zM27 24h1v2h-1zM21 26h1v2h-1zM22 25h2v1h-2zM28 21h3v2h-3zM49 27h1v1h-1zM51 25h2v2h-2zM51 20h1v2h-1zM56 17h3v2h-3zM49 23h2v1h-2zM55 20h3v2h-3z" fill="#fff"/></svg>
    <svg style="left:161px;top:27px" width="60" height="30" viewBox="0 0 60 30" shape-rendering="crispEdges"><rect width="60" height="30" fill="#fff"/><path d="M0 0h16v16h-16zM32 0h16v16h-16zM16 16h16v14h-16zM48 16h12v14h-12z" fill="#bdbdbd"/><path d="M5 5h1v1h-1zM11 3h1v1h-1zM3 2h3v1h-3zM12 5h1v2h-1zM3 11h3v1h-3zM5 3h1v2h-1zM8 12h2v1h-2zM13 5h2v1h-2zM8 13h3v2h-3zM11 6h2v2h-2zM11 2h2v2h-2zM12 8h3v1h-3zM8 11h2v1h-2zM5 4h1v2h-1zM37 6h2v2h-2zM42 5h2v1h-2zM42 8h3v1h-3zM42 4h1v2h-1zM35 2h2v2h-2zM39 1h2v1h-2zM36 3h2v2h-2zM43 5h1v2h-1zM44 5h2v1h-2zM44 11h2v1h-2zM44 10h1v2h-1zM36 10h1v1h-1zM38 10h3v2h-3zM35 5h1v1h-1zM29 27h3v1h-3zM20 19h1v2h-1zM27 26h3v1h-3zM24 22h1v1h-1zM19 21h1v2h-1zM21 21h3v1h-3zM24 25h2v1h-2zM17 22h2v1h-2zM24 25h3v2h-3zM20 27h1v2h-1zM29 17h2v1h-2zM28 19h2v2h-2zM27 20h2v2h-2zM26 20h2v1h-2zM53 23h1v2h-1zM55 17h2v2h-2zM56 18h1v1h-1zM49 27h2v1h-2zM56 24h3v2h-3zM54 17h2v2h-2z" fill="#fff"/></svg>
    <div class="t" style="left:16px;top:68px;font-size:12px;line-height:14px;letter-spacing:-0.55px">F:1</div><div class="t" style="left:40px;top:68px;font-size:12px;line-height:14px;letter-spacing:-0.55px">D:11</div>
    <div class="t" style="left:92px;top:68px;font-size:12px;line-height:14px;letter-spacing:-0.55px">F:2</div><div class="t" style="left:116px;top:68px;font-size:12px;line-height:14px;letter-spacing:-0.55px">D:11</div>
    <div class="t" style="left:168px;top:68px;font-size:12px;line-height:14px;letter-spacing:-0.55px">F:3</div><div class="t" style="left:192px;top:68px;font-size:12px;line-height:14px;letter-spacing:-0.55px">D:11</div>
  </div>
</div>

<!-- ===== RIGHT PANEL ===== -->
<div id="rp" style="left:745px;top:122px;width:55px;height:431px;">
  <div class="hl dk" style="left:0;top:0;width:55px"></div>
  <div class="hl wh" style="left:0;top:1px;width:55px"></div>
  <div class="hl dk" style="left:0;top:430px;width:55px"></div>
  <div class="etch" style="left:3px;top:6px;width:49px;height:100px;">
    <div style="left:1px;top:1px;width:45px;height:96px;background:linear-gradient(to right,#000 0%,rgba(0,0,0,0) 50%,rgba(255,255,255,0) 50%,#fff 100%),linear-gradient(to bottom,#f00 0%,#ff0 17%,#0f0 33%,#0ff 50%,#00f 67%,#f0f 83%,#ff0038 100%);"></div>
  </div>
  <div class="etch" style="left:3px;top:109px;width:49px;height:39px;">
    <div style="left:16px;top:13px;width:30px;height:22px;background:#000"></div>
    <div style="left:3px;top:3px;width:29px;height:22px;background:#000"></div>
    <svg style="left:3px;top:26px" width="13" height="10" viewBox="0 0 13 10" shape-rendering="crispEdges"><path d="M3 0h1v1h1v1h1v1h-2v4h6v-2h1v1h1v1h1v1h-1v1h-1v1h-1v-2h-7v-5h-2v-1h1v-1h1z" fill="#000"/></svg>
  </div>
  <div class="etch" style="left:3px;top:152px;width:49px;height:82px;">
    <div class="t b" style="left:8px;top:2px;font-family:'Liberation Serif',serif;font-size:11px;line-height:11px;">R<br>G<br>B<br>O</div>
    <div class="t" style="left:18px;top:2px;font-family:'Liberation Serif',serif;font-size:10px;line-height:11px;letter-spacing:0px">--<br>--<br>--<br>0</div>
    <div class="etch" style="left:5px;top:48px;width:36px;height:28px;background:#808080;">
      <svg style="left:1px;top:1px" width="33" height="25" viewBox="0 0 33 25"><path d="M0 0L33 25M33 0L0 25" stroke="#000" stroke-width="1" fill="none"/></svg>
    </div>
  </div>

</div>
<div class="hl wh" style="left:745px;top:553px;width:55px"></div>
<!-- ===== STATUS BAR ===== -->
<div id="status" style="left:0;top:554px;width:800px;height:18px;">
  <div class="t" style="left:1px;top:4px;letter-spacing:-0.08px">For Help, press F1</div>
  <div class="sunk1" style="left:520px;top:2px;width:99px;height:16px;"></div>
  <div class="t" style="left:524px;top:4px">3 frames</div>
  <div class="t" style="left:574px;top:4px;letter-spacing:0.3px">60 x 30</div>
  <div class="sunk1" style="left:621px;top:2px;width:178px;height:16px;"></div>
  <div class="t" style="left:623px;top:4px">0.33 total seconds</div>
  <div class="t" style="left:720px;top:4px;letter-spacing:0.15px">(0.11 seconds)</div>
</div>
<!-- ===== TASKBAR ===== -->
<div id="taskbar" style="left:0;top:572px;width:800px;height:28px;">
  <div class="hl wh" style="left:0;top:1px;width:800px"></div>
  <div class="raised" id="startbtn" style="left:2px;top:4px;width:52px;height:22px;">
    <svg style="left:2px;top:2px" width="16" height="15" viewBox="-0.8 0.6 15 13.6">
      <path d="M1.5 2.5C3 1.2 5 1.5 6.8 2.6L5.6 7C4 6 2.2 5.8 0.6 7Z" fill="#e8532c"/>
      <path d="M7.8 3.1C9.5 4 11.5 4.2 13.6 3L12.4 7.4C10.5 8.5 8.4 8.3 6.6 7.4Z" fill="#6cb93a"/>
      <path d="M0.4 8C2 6.9 3.9 7.1 5.4 8L4.2 12.3C2.6 11.3 0.8 11.2-0.8 12.3Z" fill="#3f6fd8"/>
      <path d="M6.4 8.5C8.2 9.4 10.2 9.6 12.2 8.5L11 12.8C9 13.9 7 13.7 5.2 12.8Z" fill="#f2c121"/>
    </svg>
    <div class="t b" style="left:18px;top:4px;font-size:12px;letter-spacing:0.6px">Start</div>
  </div>
  <div style="left:61px;top:6px;width:3px;height:18px;box-sizing:border-box;border:1px solid;border-color:#fff #808080 #808080 #fff;"></div>
  <svg style="left:71px;top:7px" width="16" height="15" viewBox="0 0 16 15"><path d="M1.6 1.6L12.4 0.6L14.4 2.4L14.8 12.2L3.2 14.4L0.8 12.6Z" fill="#2a5fc4" stroke="#1c3f8c" stroke-width=".8"/><path d="M11.6 3.4C8 1.8 3.6 3.2 3.4 7.6C3.4 11.6 8 12.8 12 11.2L11.8 8.8C9.6 9.8 7 9.6 6.8 7.6C6.8 5.6 9.4 5.2 11.4 6Z" fill="#f4f9ff"/><path d="M7.2 7.4L10.4 7.8" stroke="#000" stroke-width="1.2"/><path d="M2.2 2.6L3.2 13" stroke="#9cc8f4" stroke-width="1"/><circle cx="14.4" cy="4.6" r="1" fill="#e03020"/></svg>
  <svg style="left:94px;top:7px" width="16" height="16" viewBox="0 0 16 16"><ellipse cx="8" cy="8" rx="8.2" ry="3" transform="rotate(-35 8 8)" fill="none" stroke="#6fb4f4" stroke-width="1.2"/><circle cx="8" cy="8.8" r="4.4" fill="none" stroke="#1c74dc" stroke-width="3.4" stroke-dasharray="23.6 4" stroke-dashoffset="-4.6"/><path d="M4 8.8H13.6" stroke="#1c74dc" stroke-width="2.4"/><path d="M4.6 5.6A4.6 4.6 0 0 1 11 4.8" fill="none" stroke="#7cc0ff" stroke-width="1.4"/><path d="M0.8 13.6C2 12 3 11 4 10.4" fill="none" stroke="#6fb4f4" stroke-width="1.3"/></svg>
  <svg style="left:117px;top:7px" width="16" height="15" viewBox="0 0 16 15"><path d="M2 3L8 0.6L14.2 2.4L15 10.4L9.4 14.4L2.6 12.6L0.8 6.6Z" fill="#2f6fd0"/><path d="M4.4 3.4L11.8 3L12 6.8L4.6 7.4Z" fill="#e6f2ff"/><path d="M8.2 7.8L14.2 7L14 12L8.2 12.6Z" fill="#f4f8ff"/><path d="M1 5.4L5.4 4.6L4.6 9.4Z" fill="#6fb0ff"/><path d="M3.4 8.4h5v2.2h-5z" fill="#fff"/><circle cx="11.6" cy="4.6" r=".9" fill="#203060"/></svg>
  <svg style="left:140px;top:8px" width="16" height="14" viewBox="0 0 16 14"><path d="M0.8 3C0.8 1.6 2 1 3 1H6L7.6 2.8H13.6C14.8 2.8 15.4 3.6 15.4 4.6L14.6 11.6C14.4 12.8 13.6 13.2 12.6 13.2H2.4C1.4 13.2 0.8 12.4 0.8 11.4Z" fill="#e8b838" stroke="#b8860c" stroke-width=".7"/><path d="M2 5.4H15L14.2 11.4C14 12.2 13.6 12.4 13 12.4H2.6C2 12.4 1.6 12 1.6 11.4Z" fill="#f8dc78"/><circle cx="5.6" cy="6.6" r="3.1" fill="#cfe8fa" stroke="#e8f4ff" stroke-width=".9"/><circle cx="5.6" cy="6.6" r="2" fill="#a8d4f4"/><path d="M11 9.4L13.4 12" stroke="#d0a020" stroke-width="1.6"/></svg>
  <svg style="left:162px;top:6px" width="17" height="16" viewBox="0 0 17 16"><path d="M2 5C4 2 12 1.5 15 4.5C16.5 7 15.5 11.5 12 13.5C8 15 3 14 1.5 11C0.8 9 1 6.5 2 5Z" fill="#e8922c" stroke="#a85a10" stroke-width=".8"/><circle cx="5" cy="6" r="1.4" fill="#d02020"/><circle cx="9" cy="4.6" r="1.3" fill="#f0e040"/><circle cx="12.5" cy="6.4" r="1.3" fill="#30a030"/><circle cx="12.6" cy="10" r="1.3" fill="#3050d0"/><ellipse cx="5.4" cy="10.6" rx="2" ry="1.4" fill="#f8f0e0" stroke="#603000" stroke-width=".6"/><path d="M0.8 0.8L10.5 11.5" stroke="#2a2aa0" stroke-width="2"/><path d="M9.5 10.5L12 13.2" stroke="#101010" stroke-width="1.6"/></svg>
  <svg style="left:177px;top:19px" width="3" height="5" viewBox="0 0 3 5" shape-rendering="crispEdges"><path d="M0 0h3v1h-3zM2 1h1v1h-1zM1 2h1v3h-1z" fill="#000"/></svg>
  <svg style="left:186px;top:7px" width="16" height="16" viewBox="0 0 16 16" shape-rendering="crispEdges"><path d="M0 0h2v1h-2zM3 0h2v1h-2zM6 0h2v1h-2zM10 1h1v1h-1zM0 2h3v1h-3zM4 2h6v1h-6zM0 3h3v1h-3zM4 3h5v1h-5zM10 3h1v1h-1zM0 4h3v1h-3zM4 4h4v1h-4zM9 4h2v1h-2zM0 5h3v1h-3zM4 5h3v1h-3zM8 5h3v1h-3zM0 6h3v1h-3zM4 6h2v1h-2zM7 6h4v1h-4zM0 7h3v1h-3zM4 7h9v1h-9zM14 7h2v1h-2zM6 8h5v1h-5zM0 9h2v1h-2zM3 9h2v1h-2zM6 9h6v1h-6zM14 9h1v1h-1zM6 10h5v1h-5zM12 10h1v1h-1zM14 10h1v1h-1zM6 11h5v1h-5zM13 11h1v1h-1zM6 12h5v1h-5zM12 12h1v1h-1zM14 12h1v1h-1zM5 13h1v1h-1zM7 13h5v1h-5zM14 13h1v1h-1zM6 14h1v1h-1zM8 15h2v1h-2zM11 15h2v1h-2zM14 15h2v1h-2z" fill="#000"/><path d="M0 1h9v1h-9zM3 2h1v1h-1zM10 2h1v1h-1zM3 3h1v1h-1zM9 3h1v1h-1zM3 4h1v1h-1zM8 4h1v1h-1zM3 5h1v1h-1zM7 5h1v1h-1zM3 6h1v1h-1zM6 6h1v1h-1zM3 7h1v1h-1zM0 8h6v1h-6zM5 9h1v1h-1zM5 10h1v1h-1zM5 11h1v1h-1zM5 12h1v1h-1zM6 13h1v1h-1zM7 14h4v1h-4z" fill="#b09458"/><path d="M11 8h5v1h-5zM12 9h2v1h-2zM15 9h1v1h-1zM11 10h1v1h-1zM13 10h1v1h-1zM15 10h1v1h-1zM11 11h2v1h-2zM14 11h2v1h-2zM11 12h1v1h-1zM13 12h1v1h-1zM15 12h1v1h-1zM12 13h2v1h-2zM15 13h1v1h-1zM11 14h5v1h-5z" fill="#ffffd8"/></svg>
  <svg style="left:208px;top:6px" width="18" height="16" viewBox="0 0 18 16"><path d="M3 4C5 0.8 11 0 13.5 2.5C15.5 4.5 15 8 13 9.5L12.5 12.5C9 13.5 6 12.5 5.5 10.5C3 11 0.8 10 0.8 8C0.8 6.5 1.8 5.3 3 4Z" fill="#a80c18"/><path d="M3.6 7.2h3.2M5.2 5.8v2.8" stroke="#fff" stroke-width="1.2"/><text x="9" y="15.6" font-family="Liberation Sans" font-weight="bold" font-size="12" fill="#000" stroke="#000" stroke-width="2.2" stroke-linejoin="round">8</text><text x="9" y="15.6" font-family="Liberation Sans" font-weight="bold" font-size="12" fill="#fff">8</text></svg>
  <svg style="left:245px;top:9px" width="8" height="5" viewBox="0 0 8 5" shape-rendering="crispEdges"><path d="M0 0h2v1h-2zM4 0h2v1h-2zM1 1h2v1h-2zM5 1h2v1h-2zM2 2h2v1h-2zM6 2h2v1h-2zM1 3h2v1h-2zM5 3h2v1h-2zM0 4h2v1h-2zM4 4h2v1h-2z" fill="#000"/></svg>
  <div style="left:259px;top:6px;width:3px;height:18px;box-sizing:border-box;border:1px solid;border-color:#fff #808080 #808080 #fff;"></div>
  <div class="raised" style="left:266px;top:4px;width:83px;height:22px;">
    <svg style="left:3px;top:2px" width="16" height="16" viewBox="0 0 16 16"><ellipse cx="8" cy="8" rx="8.2" ry="3" transform="rotate(-35 8 8)" fill="none" stroke="#6fb4f4" stroke-width="1.2"/><circle cx="8" cy="8.8" r="4.4" fill="none" stroke="#1c74dc" stroke-width="3.4" stroke-dasharray="23.6 4" stroke-dashoffset="-4.6"/><path d="M4 8.8H13.6" stroke="#1c74dc" stroke-width="2.4"/><path d="M4.6 5.6A4.6 4.6 0 0 1 11 4.8" fill="none" stroke="#7cc0ff" stroke-width="1.4"/><path d="M0.8 13.6C2 12 3 11 4 10.4" fill="none" stroke="#6fb4f4" stroke-width="1.3"/></svg><div class="t" style="left:22px;top:4px;letter-spacing:0.9px"><b>2</b> Inter...</div>
    <svg style="left:73px;top:10px" width="5" height="3" viewBox="0 0 5 3" shape-rendering="crispEdges"><path d="M0 0h5v1h-1v1h-1v1h-1v-1h-1v-1h-1z" fill="#000"/></svg>
  </div>
  <div class="raised" style="left:352px;top:4px;width:83px;height:22px;">
    <svg style="left:3px;top:3px" width="15" height="15" viewBox="0 0 15 15"><path d="M2 1.4L10.6 0.8L13.4 11.2L12.6 13.2L2.4 14.4L1 13Z" fill="#e8f6ff" stroke="#406080" stroke-width=".8"/><path d="M3.2 2L10.4 1.6L12.6 10.8L4.6 12Z" fill="#3c9cec"/><path d="M4.6 4.6L10 4.2L11.2 9.4L5.6 10.2Z" fill="#58b4f8"/><path d="M3.4 1.6h7" stroke="#b0d8f8" stroke-width="1" stroke-dasharray="1 1"/></svg><div class="t" style="left:21px;top:4px;letter-spacing:0.4px">Untitled ...</div>
  </div>
  <div class="raised" style="left:438px;top:4px;width:83px;height:22px;">
    <svg style="left:3px;top:2px" width="17" height="16" viewBox="0 0 17 16"><path d="M2 5C4 2 12 1.5 15 4.5C16.5 7 15.5 11.5 12 13.5C8 15 3 14 1.5 11C0.8 9 1 6.5 2 5Z" fill="#e8922c" stroke="#a85a10" stroke-width=".8"/><circle cx="5" cy="6" r="1.4" fill="#d02020"/><circle cx="9" cy="4.6" r="1.3" fill="#f0e040"/><circle cx="12.5" cy="6.4" r="1.3" fill="#30a030"/><circle cx="12.6" cy="10" r="1.3" fill="#3050d0"/><ellipse cx="5.4" cy="10.6" rx="2" ry="1.4" fill="#f8f0e0" stroke="#603000" stroke-width=".6"/><path d="M0.8 0.8L10.5 11.5" stroke="#2a2aa0" stroke-width="2"/><path d="M9.5 10.5L12 13.2" stroke="#101010" stroke-width="1.6"/></svg><svg style="left:17px;top:15px" width="2" height="4" viewBox="0 0 2 4" shape-rendering="crispEdges"><path d="M0 0h2v2h-1v2h-1v-1h1v-1h-1z" fill="#000"/></svg><div class="t" style="left:22px;top:4px;letter-spacing:0.15px">Jasc Pai...</div>
  </div>
  <div class="raised" style="left:524px;top:4px;width:83px;height:22px;">
    <svg style="left:3px;top:2px" width="18" height="16" viewBox="0 0 18 16"><path d="M3 4C5 0.8 11 0 13.5 2.5C15.5 4.5 15 8 13 9.5L12.5 12.5C9 13.5 6 12.5 5.5 10.5C3 11 0.8 10 0.8 8C0.8 6.5 1.8 5.3 3 4Z" fill="#a80c18"/><path d="M3.6 7.2h3.2M5.2 5.8v2.8" stroke="#fff" stroke-width="1.2"/><text x="9" y="15.6" font-family="Liberation Sans" font-weight="bold" font-size="12" fill="#000" stroke="#000" stroke-width="2.2" stroke-linejoin="round">8</text><text x="9" y="15.6" font-family="Liberation Sans" font-weight="bold" font-size="12" fill="#fff">8</text></svg><div class="t" style="left:23px;top:4px;letter-spacing:0.1px">Jasc Pai...</div>
  </div>
  <div id="tbact" style="left:610px;top:4px;width:83px;height:22px;box-sizing:border-box;border:1px solid;border-color:#404040 #fff #fff #404040;box-shadow:inset 1px 1px 0 #808080;background:conic-gradient(#fff 25%,#d4d0c8 0 50%,#fff 0 75%,#d4d0c8 0) 0 0/2px 2px;">
    <svg style="left:4px;top:3px" width="16" height="16" viewBox="0 0 16 16" shape-rendering="crispEdges"><path d="M0 0h2v1h-2zM3 0h2v1h-2zM6 0h2v1h-2zM10 1h1v1h-1zM0 2h3v1h-3zM4 2h6v1h-6zM0 3h3v1h-3zM4 3h5v1h-5zM10 3h1v1h-1zM0 4h3v1h-3zM4 4h4v1h-4zM9 4h2v1h-2zM0 5h3v1h-3zM4 5h3v1h-3zM8 5h3v1h-3zM0 6h3v1h-3zM4 6h2v1h-2zM7 6h4v1h-4zM0 7h3v1h-3zM4 7h9v1h-9zM14 7h2v1h-2zM6 8h5v1h-5zM0 9h2v1h-2zM3 9h2v1h-2zM6 9h6v1h-6zM14 9h1v1h-1zM6 10h5v1h-5zM12 10h1v1h-1zM14 10h1v1h-1zM6 11h5v1h-5zM13 11h1v1h-1zM6 12h5v1h-5zM12 12h1v1h-1zM14 12h1v1h-1zM5 13h1v1h-1zM7 13h5v1h-5zM14 13h1v1h-1zM6 14h1v1h-1zM8 15h2v1h-2zM11 15h2v1h-2zM14 15h2v1h-2z" fill="#000"/><path d="M0 1h9v1h-9zM3 2h1v1h-1zM10 2h1v1h-1zM3 3h1v1h-1zM9 3h1v1h-1zM3 4h1v1h-1zM8 4h1v1h-1zM3 5h1v1h-1zM7 5h1v1h-1zM3 6h1v1h-1zM6 6h1v1h-1zM3 7h1v1h-1zM0 8h6v1h-6zM5 9h1v1h-1zM5 10h1v1h-1zM5 11h1v1h-1zM5 12h1v1h-1zM6 13h1v1h-1zM7 14h4v1h-4z" fill="#b09458"/><path d="M11 8h5v1h-5zM12 9h2v1h-2zM15 9h1v1h-1zM11 10h1v1h-1zM13 10h1v1h-1zM15 10h1v1h-1zM11 11h2v1h-2zM14 11h2v1h-2zM11 12h1v1h-1zM13 12h1v1h-1zM15 12h1v1h-1zM12 13h2v1h-2zM15 13h1v1h-1zM11 14h5v1h-5z" fill="#ffffd8"/></svg><div class="t b" style="left:24px;top:5px;letter-spacing:0.4px">Jasc Ani...</div>
  </div>
  <div class="sunk1" id="tray" style="left:703px;top:4px;width:95px;height:22px;">
    <svg style="left:4px;top:8px" width="8" height="5" viewBox="0 0 8 5" shape-rendering="crispEdges"><path d="M2 0h2v1h-2zM6 0h2v1h-2zM1 1h2v1h-2zM5 1h2v1h-2zM0 2h2v1h-2zM4 2h2v1h-2zM1 3h2v1h-2zM5 3h2v1h-2zM2 4h2v1h-2zM6 4h2v1h-2z" fill="#000"/></svg>
    <svg style="left:17px;top:1px" width="18" height="18" viewBox="0 0 18 18"><ellipse cx="5.2" cy="5" rx="4.6" ry="3.7" transform="rotate(20 5.2 5)" fill="#d42810"/><ellipse cx="4.4" cy="3.8" rx="2.6" ry="1.6" transform="rotate(20 4.4 3.8)" fill="#f05a38" opacity=".8"/><ellipse cx="10.8" cy="12.4" rx="5" ry="4" transform="rotate(20 10.8 12.4)" fill="#2f86e0"/><ellipse cx="10.6" cy="12" rx="3.2" ry="2.2" transform="rotate(20 10.6 12)" fill="#6ab8ff" opacity=".9"/><path d="M7.2 8.2L8.8 9.4" stroke="#903040" stroke-width="1.6"/></svg>
    <div class="t" style="left:42px;top:4px;letter-spacing:0.2px">9:00 AM</div>
  </div>

</div>
</body>
</html>
